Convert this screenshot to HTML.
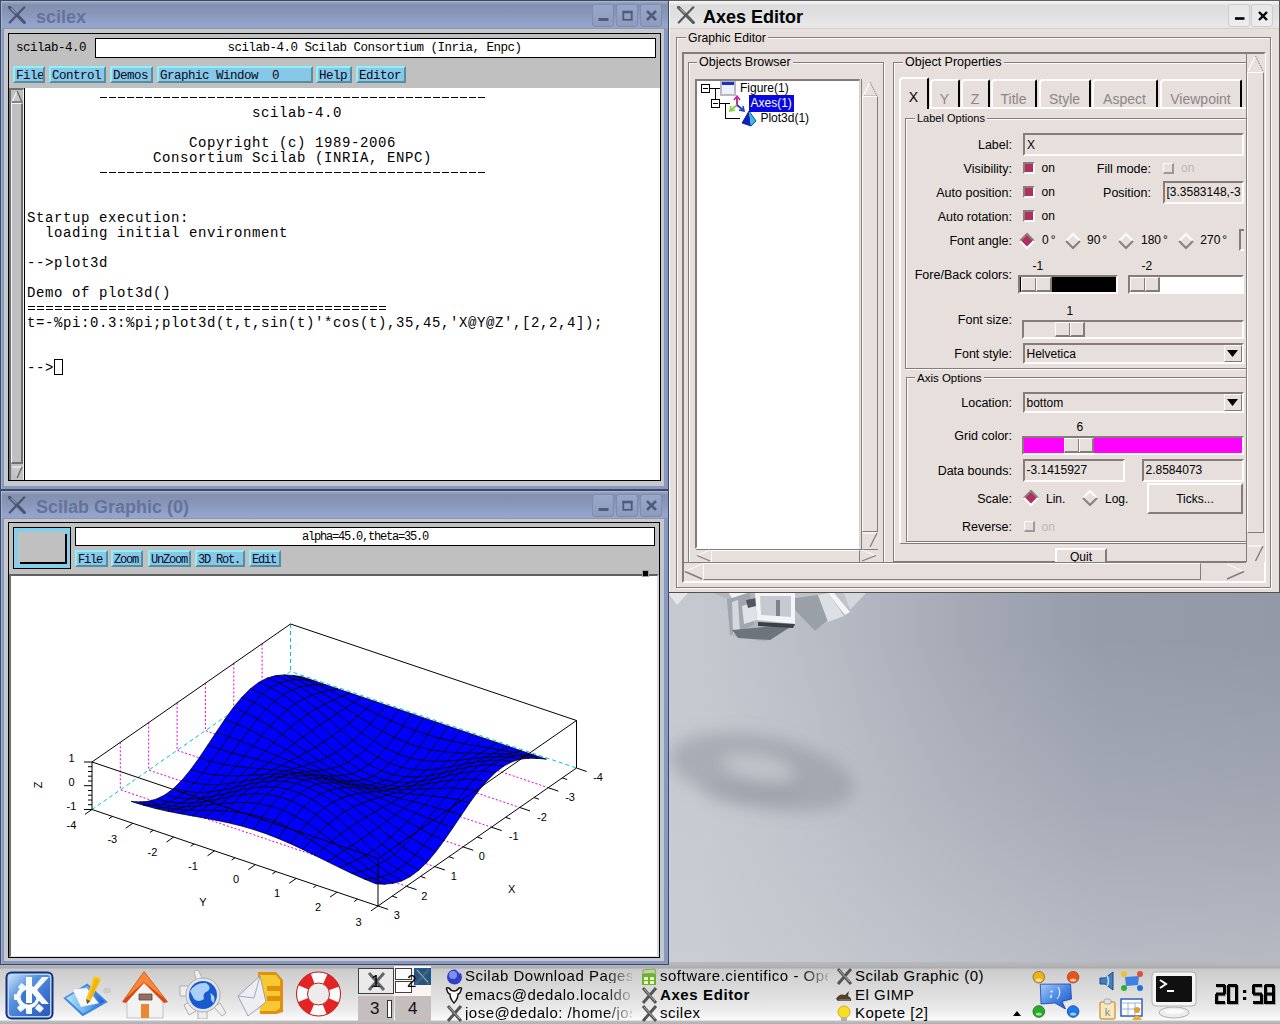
<!DOCTYPE html><html><head><meta charset="utf-8"><style>
*{margin:0;padding:0;box-sizing:border-box}
html,body{width:1280px;height:1024px;overflow:hidden}
body{position:relative;font-family:"Liberation Sans",sans-serif;background:#a9aeb7}
div{position:absolute}
.t{white-space:pre;line-height:1}
.mono{font-family:"Liberation Mono",monospace}
.mb{background:#87c8e8;border-style:solid;border-width:2px;border-color:#90f0f8 #5a8ca0 #5a8ca0 #90f0f8;font-family:"Liberation Mono",monospace;font-size:12.5px;letter-spacing:-0.5px;color:#050a20;line-height:13px;padding-left:1px;white-space:pre;overflow:hidden}
.con{font-family:"Liberation Mono",monospace;font-size:14px;letter-spacing:0.6px;line-height:15px;white-space:pre;color:#000}
.tbtn{border:1px solid #7f8cab;border-radius:3px;background:linear-gradient(#98a6c8,#8d9bbf)}
</style></head><body>
<div style="left:0px;top:0px;width:1280px;height:1024px;background:linear-gradient(180deg,rgba(205,208,214,0) 0px,rgba(205,208,214,0) 640px,rgba(205,208,214,0.25) 800px,rgba(205,208,214,0.6) 965px),linear-gradient(90deg,#c9ccd2 0px,#c5c8cf 700px,#b8bcc5 820px,#a5aab5 960px,#969caa 1100px,#9399a6 1280px)"></div>
<svg width="280" height="180" style="position:absolute;left:640px;top:690px"><defs><filter id="bl" x="-30%" y="-50%" width="160%" height="200%"><feGaussianBlur stdDeviation="8"/></filter></defs><g filter="url(#bl)"><ellipse cx="122" cy="82" rx="94" ry="36" fill="rgba(140,145,156,0.52)" transform="rotate(11 122 82)"/><ellipse cx="112" cy="102" rx="50" ry="14" fill="rgba(140,145,156,0.25)"/><ellipse cx="118" cy="78" rx="36" ry="11" fill="rgba(196,199,205,0.95)" transform="rotate(11 118 78)"/></g></svg>
<svg width="220" height="60" style="position:absolute;left:668px;top:590px">
<path d="M0,3 L20,3 L9,15 Z" fill="#e4e6ea"/>
<path d="M45,3 L59,9 L62,45 L97,52 L127,35 L127,3 Z" fill="#b4b8be"/>
<path d="M59,9 L82,3 L86,35 L62,45 Z" fill="#a0a6ae"/>
<path d="M64,12 L70,10 L72,42 L65,44 Z" fill="#d4d8dc"/>
<path d="M74,16 L87,12 L89,30 L76,34 Z" fill="#dfe2e6"/>
<path d="M78,10 L88,8 L88,16 L80,18 Z" fill="#50565e"/>
<path d="M87,3 L127,3 L127,34 L89,30 Z" fill="#f2f4f6"/>
<path d="M92,6 L123,6 L123,27 L93,25 Z" fill="#c6cad0"/>
<path d="M108,10 L112,10 L112,26 L108,26 Z" fill="#7c828a"/>
<path d="M64,40 L127,34 L102,50 L70,48 Z" fill="#6e747c"/>
<path d="M90,32 L127,34 L125,38 L90,36 Z" fill="#3a4048"/>
<path d="M127,3 L198,3 L147,41 L127,20 Z" fill="#c0c4ca"/>
<path d="M127,8 L150,5 L160,30 L147,41 L127,20 Z" fill="#9aa0a8"/>
<path d="M160,3 L166,3 L182,22 L177,25 Z" fill="#f4f4f6"/>
<path d="M150,5 L160,3 L176,26 L160,32 Z" fill="#dcdfe3"/>
<path d="M176,3 L198,3 L182,20 Z" fill="#d4d7dc"/>
<path d="M60,2 L82,2 L64,8 Z" fill="#f0f2f4"/>
</svg>
<div style="left:0px;top:0px;width:669px;height:490px;background:#8898c0;border:1px solid #3c4a66"></div>
<div style="left:1px;top:1px;width:667px;height:1px;background:#a8b4cc"></div>
<div style="left:1px;top:1px;width:1px;height:488px;background:#a8b4cc"></div>
<div style="left:2px;top:2px;width:666px;height:26px;background:linear-gradient(#9aa5c0 0px,#8390b0 3px,#8794b6 10px,#93a3cc 22px,#96a4c6 26px)"></div>
<div style="left:2px;top:28px;width:666px;height:1px;background:#8c98b0"></div>
<div style="left:8px;top:6px;width:18px;height:18px;"><svg width="18" height="18" viewBox="0 0 18 18" style="position:absolute;left:0;top:0"><path d="M16.3,1.3 L1.8,16.5" stroke="#4a5670" stroke-width="2.2" stroke-linecap="round"/><path d="M1.5,1.3 L16.3,16.5" stroke="#4a5670" stroke-width="3.2" stroke-linecap="round"/><path d="M3,2.3 L8,7.5" stroke="#c8d0e0" stroke-width="1"/></svg></div>
<div class="t" style="left:36px;top:8px;font-size:18px;font-weight:bold;color:#65739a">scilex</div>
<div class="tbtn" style="left:592px;top:4px;width:22px;height:23px;"><svg width="22" height="23" style="position:absolute;left:-1px;top:-1px"><path d="M6.5,15.5 L16.5,15.5" stroke="#505c7c" stroke-width="3"/></svg></div>
<div class="tbtn" style="left:616px;top:4px;width:22px;height:23px;"><svg width="22" height="23" style="position:absolute;left:-1px;top:-1px"><rect x="7.3" y="8" width="8.4" height="7.8" fill="none" stroke="#505c7c" stroke-width="1.8"/><path d="M6.5,8 L16.5,8" stroke="#505c7c" stroke-width="2.6"/></svg></div>
<div class="tbtn" style="left:640px;top:4px;width:22px;height:23px;"><svg width="22" height="23" style="position:absolute;left:-1px;top:-1px"><path d="M7,7 L16,16 M16,7 L7,16" stroke="#505c7c" stroke-width="2.6"/></svg></div>
<div style="left:4px;top:29px;width:660px;height:457px;background:#c5c8cd"></div>
<div style="left:8px;top:33px;width:653px;height:448px;background:#c0c0c0;border:1px solid #000"></div>
<div class="t" style="left:16px;top:42px;font-family:Liberation Mono;font-size:12.5px;letter-spacing:-0.5px;color:#000">scilab-4.0</div>
<div style="left:95px;top:38px;width:561px;height:20px;background:#fff;border:1px solid #000"></div>
<div class="t" style="left:94px;top:42px;font-family:Liberation Mono;font-size:12.5px;letter-spacing:-0.5px;color:#000;width:561px;text-align:center">scilab-4.0 Scilab Consortium (Inria, Enpc)</div>
<div class="mb" style="left:13px;top:66px;width:32px;height:17px;padding-top:2px">File</div>
<div class="mb" style="left:49px;top:66px;width:57px;height:17px;padding-top:2px">Control</div>
<div class="mb" style="left:110px;top:66px;width:43px;height:17px;padding-top:2px">Demos</div>
<div class="mb" style="left:157px;top:66px;width:156px;height:17px;padding-top:2px">Graphic Window  0</div>
<div class="mb" style="left:316px;top:66px;width:36px;height:17px;padding-top:2px">Help</div>
<div class="mb" style="left:356px;top:66px;width:50px;height:17px;padding-top:2px">Editor</div>
<div style="left:9px;top:88px;width:15px;height:392px;background:#c0c0c0;border-style:solid;border-width:2px 1px 0 2px;border-color:#707070 #f0f0f0 #f0f0f0 #707070"></div>
<div style="left:11px;top:90px;width:12px;height:13px;"><svg width="12" height="13" style="position:absolute;left:0;top:0"><path d="M6,1 L11,12 L1,12 Z" fill="#c8c8c8"/><path d="M6,1 L1,12" stroke="#f4f4f4" stroke-width="1.2"/><path d="M6,1 L11,12 L1,12" fill="none" stroke="#6c6c6c" stroke-width="1.4"/></svg></div>
<div style="left:11px;top:103px;width:12px;height:361px;background:#c0c0c0;border-style:solid;border-width:1px 2px 2px 1px;border-color:#f4f4f4 #707070 #707070 #f4f4f4"></div>
<div style="left:11px;top:466px;width:12px;height:13px;"><svg width="12" height="13" style="position:absolute;left:0;top:0"><path d="M1,1 L11,1 L6,12 Z" fill="#c8c8c8"/><path d="M1,1 L11,1" stroke="#f4f4f4" stroke-width="1.2"/><path d="M11,1 L6,12" stroke="#6c6c6c" stroke-width="1.4"/></svg></div>
<div style="left:24px;top:88px;width:1px;height:393px;background:#000"></div>
<div style="left:25px;top:88px;width:635px;height:392px;background:#fff"></div>
<div class="con" style="left:27px;top:91px">
                         scilab-4.0

                  Copyright (c) 1989-2006
              Consortium Scilab (INRIA, ENPC)



Startup execution:
  loading initial environment

-->plot3d

Demo of plot3d()

t=-%pi:0.3:%pi;plot3d(t,t,sin(t)'*cos(t),35,45,'X@Y@Z',[2,2,4]);


--></div>
<div style="left:100px;top:97px;width:385px;height:1px;background:repeating-linear-gradient(90deg,#000 0px,#000 7px,transparent 7px,transparent 9px)"></div>
<div style="left:100px;top:172px;width:385px;height:1px;background:repeating-linear-gradient(90deg,#000 0px,#000 7px,transparent 7px,transparent 9px)"></div>
<div style="left:28px;top:306px;width:358px;height:1px;background:repeating-linear-gradient(90deg,#000 0px,#000 7px,transparent 7px,transparent 9px)"></div>
<div style="left:28px;top:309px;width:358px;height:1px;background:repeating-linear-gradient(90deg,#000 0px,#000 7px,transparent 7px,transparent 9px)"></div>
<div style="left:54px;top:359px;width:9px;height:16px;border:1px solid #000"></div>
<div style="left:0px;top:490px;width:669px;height:475px;background:#8898c0;border:1px solid #3c4a66"></div>
<div style="left:1px;top:491px;width:667px;height:1px;background:#a8b4cc"></div>
<div style="left:1px;top:491px;width:1px;height:473px;background:#a8b4cc"></div>
<div style="left:2px;top:492px;width:666px;height:26px;background:linear-gradient(#9aa5c0 0px,#8390b0 3px,#8794b6 10px,#93a3cc 22px,#96a4c6 26px)"></div>
<div style="left:2px;top:518px;width:666px;height:1px;background:#8c98b0"></div>
<div style="left:8px;top:496px;width:18px;height:18px;"><svg width="18" height="18" viewBox="0 0 18 18" style="position:absolute;left:0;top:0"><path d="M16.3,1.3 L1.8,16.5" stroke="#4a5670" stroke-width="2.2" stroke-linecap="round"/><path d="M1.5,1.3 L16.3,16.5" stroke="#4a5670" stroke-width="3.2" stroke-linecap="round"/><path d="M3,2.3 L8,7.5" stroke="#c8d0e0" stroke-width="1"/></svg></div>
<div class="t" style="left:36px;top:498px;font-size:18px;font-weight:bold;color:#65739a">Scilab Graphic (0)</div>
<div class="tbtn" style="left:592px;top:494px;width:22px;height:23px;"><svg width="22" height="23" style="position:absolute;left:-1px;top:-1px"><path d="M6.5,15.5 L16.5,15.5" stroke="#505c7c" stroke-width="3"/></svg></div>
<div class="tbtn" style="left:616px;top:494px;width:22px;height:23px;"><svg width="22" height="23" style="position:absolute;left:-1px;top:-1px"><rect x="7.3" y="8" width="8.4" height="7.8" fill="none" stroke="#505c7c" stroke-width="1.8"/><path d="M6.5,8 L16.5,8" stroke="#505c7c" stroke-width="2.6"/></svg></div>
<div class="tbtn" style="left:640px;top:494px;width:22px;height:23px;"><svg width="22" height="23" style="position:absolute;left:-1px;top:-1px"><path d="M7,7 L16,16 M16,7 L7,16" stroke="#505c7c" stroke-width="2.6"/></svg></div>
<div style="left:4px;top:519px;width:660px;height:442px;background:#c5c8cd"></div>
<div style="left:8px;top:522px;width:652px;height:436px;background:#c0c0c0;border:1px solid #000"></div>
<div style="left:13px;top:527px;width:58px;height:42px;background:#87ceeb;border:1px solid #000"></div>
<div style="left:18px;top:532px;width:48px;height:32px;background:#c0c0c0"></div>
<div style="left:20px;top:562px;width:47px;height:2px;background:#000"></div>
<div style="left:65px;top:534px;width:2px;height:30px;background:#000"></div>
<div style="left:75px;top:527px;width:580px;height:19px;background:#fff;border:1px solid #000"></div>
<div class="t" style="left:75px;top:531px;font-family:Liberation Mono;font-size:12px;letter-spacing:-1.2px;color:#000;width:580px;text-align:center">alpha=45.0,theta=35.0</div>
<div class="mb" style="left:75px;top:550px;width:33px;height:17px;padding-top:2px;padding-left:1px;font-size:12px;letter-spacing:-1.2px">File</div>
<div class="mb" style="left:111px;top:550px;width:32px;height:17px;padding-top:2px;padding-left:1px;font-size:12px;letter-spacing:-1.2px">Zoom</div>
<div class="mb" style="left:148px;top:550px;width:43px;height:17px;padding-top:2px;padding-left:1px;font-size:12px;letter-spacing:-1.2px">UnZoom</div>
<div class="mb" style="left:195px;top:550px;width:50px;height:17px;padding-top:2px;padding-left:1px;font-size:12px;letter-spacing:-1.2px">3D Rot.</div>
<div class="mb" style="left:249px;top:550px;width:32px;height:17px;padding-top:2px;padding-left:1px;font-size:12px;letter-spacing:-1.2px">Edit</div>
<div style="left:9px;top:574px;width:650px;height:383px;background:#fff;border-top:2px solid #606060;border-left:2px solid #707070;border-right:2px solid #d8d8d8;border-bottom:1px solid #e0e0e0"></div>
<div style="left:642px;top:570px;width:7px;height:7px;background:#000;border:1px solid #a0a0a0"></div>
<svg width="1280" height="1024" style="position:absolute;left:0;top:0" shape-rendering="auto"><g stroke="#00c8d8" stroke-width="1" stroke-dasharray="4,3" fill="none">
<path d="M290.5,624.0 L290.5,671.5 M92.0,809.5 L290.5,671.5 L576.5,768.0"/>
</g>
<g stroke="#e000e0" stroke-width="1" stroke-dasharray="2,2" fill="none">
<path d="M262.1,643.7 L262.1,691.2 L548.2,787.7"/>
<path d="M233.8,663.4 L233.8,710.9 L519.8,807.5"/>
<path d="M205.4,683.1 L205.4,730.6 L491.4,827.2"/>
<path d="M177.1,702.8 L177.1,750.3 L463.1,846.9"/>
<path d="M148.7,722.6 L148.7,770.1 L434.7,866.6"/>
<path d="M120.3,742.3 L120.3,789.8 L406.4,886.3"/>
</g>
<g fill="#0000ff" stroke="#000010" stroke-width="0.75" stroke-linejoin="round">
<path d="M301.2,676.5 L292.7,675.4 L305.0,679.9 L313.5,680.6 Z"/>
<path d="M313.5,680.6 L305.0,679.9 L317.2,684.9 L325.7,684.8 Z"/>
<path d="M292.7,675.4 L284.2,674.9 L296.5,679.7 L305.0,679.9 Z"/>
<path d="M325.7,684.8 L317.2,684.9 L329.5,690.5 L338.0,688.9 Z"/>
<path d="M305.0,679.9 L296.5,679.7 L308.7,685.5 L317.2,684.9 Z"/>
<path d="M284.2,674.9 L275.7,675.6 L288.0,680.6 L296.5,679.7 Z"/>
<path d="M338.0,688.9 L329.5,690.5 L341.8,696.4 L350.3,693.1 Z"/>
<path d="M317.2,684.9 L308.7,685.5 L321.0,692.4 L329.5,690.5 Z"/>
<path d="M296.5,679.7 L288.0,680.6 L300.2,687.2 L308.7,685.5 Z"/>
<path d="M350.3,693.1 L341.8,696.4 L354.0,702.6 L362.5,697.2 Z"/>
<path d="M275.7,675.6 L267.2,678.0 L279.5,683.1 L288.0,680.6 Z"/>
<path d="M329.5,690.5 L321.0,692.4 L333.2,700.0 L341.8,696.4 Z"/>
<path d="M308.7,685.5 L300.2,687.2 L312.5,695.1 L321.0,692.4 Z"/>
<path d="M362.5,697.2 L354.0,702.6 L366.3,708.8 L374.8,701.3 Z"/>
<path d="M288.0,680.6 L279.5,683.1 L291.7,690.2 L300.2,687.2 Z"/>
<path d="M341.8,696.4 L333.2,700.0 L345.5,708.1 L354.0,702.6 Z"/>
<path d="M267.2,678.0 L258.7,682.4 L270.9,687.6 L279.5,683.1 Z"/>
<path d="M321.0,692.4 L312.5,695.1 L324.7,704.1 L333.2,700.0 Z"/>
<path d="M374.8,701.3 L366.3,708.8 L378.5,714.9 L387.0,705.5 Z"/>
<path d="M300.2,687.2 L291.7,690.2 L304.0,698.8 L312.5,695.1 Z"/>
<path d="M354.0,702.6 L345.5,708.1 L357.8,716.2 L366.3,708.8 Z"/>
<path d="M279.5,683.1 L270.9,687.6 L283.2,694.8 L291.7,690.2 Z"/>
<path d="M333.2,700.0 L324.7,704.1 L337.0,713.6 L345.5,708.1 Z"/>
<path d="M387.0,705.5 L378.5,714.9 L390.8,720.7 L399.3,709.6 Z"/>
<path d="M258.7,682.4 L250.2,688.9 L262.4,694.0 L270.9,687.6 Z"/>
<path d="M312.5,695.1 L304.0,698.8 L316.2,708.7 L324.7,704.1 Z"/>
<path d="M366.3,708.8 L357.8,716.2 L370.0,724.1 L378.5,714.9 Z"/>
<path d="M291.7,690.2 L283.2,694.8 L295.5,703.8 L304.0,698.8 Z"/>
<path d="M345.5,708.1 L337.0,713.6 L349.3,723.3 L357.8,716.2 Z"/>
<path d="M399.3,709.6 L390.8,720.7 L403.0,726.0 L411.6,713.7 Z"/>
<path d="M270.9,687.6 L262.4,694.0 L274.7,701.2 L283.2,694.8 Z"/>
<path d="M324.7,704.1 L316.2,708.7 L328.5,719.3 L337.0,713.6 Z"/>
<path d="M378.5,714.9 L370.0,724.1 L382.3,731.3 L390.8,720.7 Z"/>
<path d="M250.2,688.9 L241.7,697.4 L253.9,702.4 L262.4,694.0 Z"/>
<path d="M304.0,698.8 L295.5,703.8 L307.7,714.0 L316.2,708.7 Z"/>
<path d="M357.8,716.2 L349.3,723.3 L361.5,732.6 L370.0,724.1 Z"/>
<path d="M411.6,713.7 L403.0,726.0 L415.3,730.7 L423.8,717.9 Z"/>
<path d="M283.2,694.8 L274.7,701.2 L287.0,710.0 L295.5,703.8 Z"/>
<path d="M337.0,713.6 L328.5,719.3 L340.7,730.0 L349.3,723.3 Z"/>
<path d="M390.8,720.7 L382.3,731.3 L394.5,737.7 L403.0,726.0 Z"/>
<path d="M262.4,694.0 L253.9,702.4 L266.2,709.3 L274.7,701.2 Z"/>
<path d="M316.2,708.7 L307.7,714.0 L320.0,725.1 L328.5,719.3 Z"/>
<path d="M370.0,724.1 L361.5,732.6 L373.8,741.1 L382.3,731.3 Z"/>
<path d="M423.8,717.9 L415.3,730.7 L427.6,734.9 L436.1,722.0 Z"/>
<path d="M241.7,697.4 L233.2,707.8 L245.4,712.6 L253.9,702.4 Z"/>
<path d="M295.5,703.8 L287.0,710.0 L299.2,720.2 L307.7,714.0 Z"/>
<path d="M349.3,723.3 L340.7,730.0 L353.0,740.3 L361.5,732.6 Z"/>
<path d="M403.0,726.0 L394.5,737.7 L406.8,743.0 L415.3,730.7 Z"/>
<path d="M274.7,701.2 L266.2,709.3 L278.4,717.6 L287.0,710.0 Z"/>
<path d="M328.5,719.3 L320.0,725.1 L332.2,736.3 L340.7,730.0 Z"/>
<path d="M382.3,731.3 L373.8,741.1 L386.0,748.3 L394.5,737.7 Z"/>
<path d="M436.1,722.0 L427.6,734.9 L439.8,738.4 L448.3,726.2 Z"/>
<path d="M253.9,702.4 L245.4,712.6 L257.7,718.8 L266.2,709.3 Z"/>
<path d="M307.7,714.0 L299.2,720.2 L311.5,731.0 L320.0,725.1 Z"/>
<path d="M361.5,732.6 L353.0,740.3 L365.3,749.6 L373.8,741.1 Z"/>
<path d="M415.3,730.7 L406.8,743.0 L419.1,747.1 L427.6,734.9 Z"/>
<path d="M233.2,707.8 L224.7,719.6 L236.9,724.2 L245.4,712.6 Z"/>
<path d="M287.0,710.0 L278.4,717.6 L290.7,727.0 L299.2,720.2 Z"/>
<path d="M340.7,730.0 L332.2,736.3 L344.5,747.0 L353.0,740.3 Z"/>
<path d="M394.5,737.7 L386.0,748.3 L398.3,754.0 L406.8,743.0 Z"/>
<path d="M448.3,726.2 L439.8,738.4 L452.1,741.3 L460.6,730.3 Z"/>
<path d="M266.2,709.3 L257.7,718.8 L269.9,726.2 L278.4,717.6 Z"/>
<path d="M320.0,725.1 L311.5,731.0 L323.7,742.1 L332.2,736.3 Z"/>
<path d="M373.8,741.1 L365.3,749.6 L377.5,757.4 L386.0,748.3 Z"/>
<path d="M427.6,734.9 L419.1,747.1 L431.3,750.0 L439.8,738.4 Z"/>
<path d="M245.4,712.6 L236.9,724.2 L249.2,729.6 L257.7,718.8 Z"/>
<path d="M299.2,720.2 L290.7,727.0 L303.0,737.1 L311.5,731.0 Z"/>
<path d="M353.0,740.3 L344.5,747.0 L356.8,756.6 L365.3,749.6 Z"/>
<path d="M406.8,743.0 L398.3,754.0 L410.5,758.1 L419.1,747.1 Z"/>
<path d="M224.7,719.6 L216.2,732.3 L228.4,736.6 L236.9,724.2 Z"/>
<path d="M460.6,730.3 L452.1,741.3 L464.3,743.8 L472.8,734.4 Z"/>
<path d="M278.4,717.6 L269.9,726.2 L282.2,734.5 L290.7,727.0 Z"/>
<path d="M332.2,736.3 L323.7,742.1 L336.0,752.6 L344.5,747.0 Z"/>
<path d="M386.0,748.3 L377.5,757.4 L389.8,763.4 L398.3,754.0 Z"/>
<path d="M439.8,738.4 L431.3,750.0 L443.6,751.8 L452.1,741.3 Z"/>
<path d="M257.7,718.8 L249.2,729.6 L261.4,735.8 L269.9,726.2 Z"/>
<path d="M311.5,731.0 L303.0,737.1 L315.2,747.4 L323.7,742.1 Z"/>
<path d="M365.3,749.6 L356.8,756.6 L369.0,764.7 L377.5,757.4 Z"/>
<path d="M419.1,747.1 L410.5,758.1 L422.8,760.6 L431.3,750.0 Z"/>
<path d="M236.9,724.2 L228.4,736.6 L240.7,741.1 L249.2,729.6 Z"/>
<path d="M472.8,734.4 L464.3,743.8 L476.6,746.0 L485.1,738.6 Z"/>
<path d="M290.7,727.0 L282.2,734.5 L294.5,743.4 L303.0,737.1 Z"/>
<path d="M344.5,747.0 L336.0,752.6 L348.2,762.1 L356.8,756.6 Z"/>
<path d="M398.3,754.0 L389.8,763.4 L402.0,767.5 L410.5,758.1 Z"/>
<path d="M216.2,732.3 L207.6,745.3 L219.9,749.3 L228.4,736.6 Z"/>
<path d="M452.1,741.3 L443.6,751.8 L455.8,752.8 L464.3,743.8 Z"/>
<path d="M269.9,726.2 L261.4,735.8 L273.7,742.6 L282.2,734.5 Z"/>
<path d="M323.7,742.1 L315.2,747.4 L327.5,757.2 L336.0,752.6 Z"/>
<path d="M377.5,757.4 L369.0,764.7 L381.3,770.9 L389.8,763.4 Z"/>
<path d="M431.3,750.0 L422.8,760.6 L435.1,761.5 L443.6,751.8 Z"/>
<path d="M249.2,729.6 L240.7,741.1 L252.9,746.0 L261.4,735.8 Z"/>
<path d="M485.1,738.6 L476.6,746.0 L488.9,748.0 L497.4,742.7 Z"/>
<path d="M303.0,737.1 L294.5,743.4 L306.7,752.3 L315.2,747.4 Z"/>
<path d="M356.8,756.6 L348.2,762.1 L360.5,770.1 L369.0,764.7 Z"/>
<path d="M410.5,758.1 L402.0,767.5 L414.3,769.7 L422.8,760.6 Z"/>
<path d="M228.4,736.6 L219.9,749.3 L232.2,752.9 L240.7,741.1 Z"/>
<path d="M464.3,743.8 L455.8,752.8 L468.1,753.2 L476.6,746.0 Z"/>
<path d="M282.2,734.5 L273.7,742.6 L285.9,749.7 L294.5,743.4 Z"/>
<path d="M336.0,752.6 L327.5,757.2 L339.7,766.1 L348.2,762.1 Z"/>
<path d="M389.8,763.4 L381.3,770.9 L393.5,775.0 L402.0,767.5 Z"/>
<path d="M207.6,745.3 L199.1,758.0 L211.4,761.6 L219.9,749.3 Z"/>
<path d="M443.6,751.8 L435.1,761.5 L447.3,761.3 L455.8,752.8 Z"/>
<path d="M261.4,735.8 L252.9,746.0 L265.2,751.0 L273.7,742.6 Z"/>
<path d="M497.4,742.7 L488.9,748.0 L501.1,750.1 L509.6,746.8 Z"/>
<path d="M315.2,747.4 L306.7,752.3 L319.0,760.9 L327.5,757.2 Z"/>
<path d="M369.0,764.7 L360.5,770.1 L372.8,776.3 L381.3,770.9 Z"/>
<path d="M422.8,760.6 L414.3,769.7 L426.6,770.0 L435.1,761.5 Z"/>
<path d="M240.7,741.1 L232.2,752.9 L244.4,756.3 L252.9,746.0 Z"/>
<path d="M476.6,746.0 L468.1,753.2 L480.3,753.4 L488.9,748.0 Z"/>
<path d="M294.5,743.4 L285.9,749.7 L298.2,756.9 L306.7,752.3 Z"/>
<path d="M348.2,762.1 L339.7,766.1 L352.0,773.7 L360.5,770.1 Z"/>
<path d="M402.0,767.5 L393.5,775.0 L405.8,777.0 L414.3,769.7 Z"/>
<path d="M219.9,749.3 L211.4,761.6 L223.7,764.4 L232.2,752.9 Z"/>
<path d="M455.8,752.8 L447.3,761.3 L459.6,760.2 L468.1,753.2 Z"/>
<path d="M273.7,742.6 L265.2,751.0 L277.4,756.1 L285.9,749.7 Z"/>
<path d="M509.6,746.8 L501.1,750.1 L513.4,752.4 L521.9,751.0 Z"/>
<path d="M327.5,757.2 L319.0,760.9 L331.2,768.7 L339.7,766.1 Z"/>
<path d="M381.3,770.9 L372.8,776.3 L385.0,780.3 L393.5,775.0 Z"/>
<path d="M199.1,758.0 L190.6,769.7 L202.9,773.1 L211.4,761.6 Z"/>
<path d="M435.1,761.5 L426.6,770.0 L438.8,768.9 L447.3,761.3 Z"/>
<path d="M252.9,746.0 L244.4,756.3 L256.7,759.5 L265.2,751.0 Z"/>
<path d="M488.9,748.0 L480.3,753.4 L492.6,753.6 L501.1,750.1 Z"/>
<path d="M306.7,752.3 L298.2,756.9 L310.5,763.8 L319.0,760.9 Z"/>
<path d="M360.5,770.1 L352.0,773.7 L364.3,779.6 L372.8,776.3 Z"/>
<path d="M414.3,769.7 L405.8,777.0 L418.0,777.1 L426.6,770.0 Z"/>
<path d="M232.2,752.9 L223.7,764.4 L235.9,766.4 L244.4,756.3 Z"/>
<path d="M468.1,753.2 L459.6,760.2 L471.8,758.8 L480.3,753.4 Z"/>
<path d="M285.9,749.7 L277.4,756.1 L289.7,761.2 L298.2,756.9 Z"/>
<path d="M521.9,751.0 L513.4,752.4 L525.6,755.2 L534.1,755.1 Z"/>
<path d="M339.7,766.1 L331.2,768.7 L343.5,775.5 L352.0,773.7 Z"/>
<path d="M393.5,775.0 L385.0,780.3 L397.3,782.4 L405.8,777.0 Z"/>
<path d="M211.4,761.6 L202.9,773.1 L215.1,775.1 L223.7,764.4 Z"/>
<path d="M447.3,761.3 L438.8,768.9 L451.1,766.9 L459.6,760.2 Z"/>
<path d="M265.2,751.0 L256.7,759.5 L268.9,762.5 L277.4,756.1 Z"/>
<path d="M501.1,750.1 L492.6,753.6 L504.9,754.3 L513.4,752.4 Z"/>
<path d="M319.0,760.9 L310.5,763.8 L322.7,770.3 L331.2,768.7 Z"/>
<path d="M372.8,776.3 L364.3,779.6 L376.5,783.6 L385.0,780.3 Z"/>
<path d="M190.6,769.7 L182.1,780.0 L194.4,783.2 L202.9,773.1 Z"/>
<path d="M426.6,770.0 L418.0,777.1 L430.3,775.6 L438.8,768.9 Z"/>
<path d="M244.4,756.3 L235.9,766.4 L248.2,767.8 L256.7,759.5 Z"/>
<path d="M480.3,753.4 L471.8,758.8 L484.1,757.5 L492.6,753.6 Z"/>
<path d="M298.2,756.9 L289.7,761.2 L302.0,766.3 L310.5,763.8 Z"/>
<path d="M534.1,755.1 L525.6,755.2 L537.9,758.4 L546.4,759.2 Z"/>
<path d="M352.0,773.7 L343.5,775.5 L355.7,781.1 L364.3,779.6 Z"/>
<path d="M405.8,777.0 L397.3,782.4 L409.5,782.6 L418.0,777.1 Z"/>
<path d="M223.7,764.4 L215.1,775.1 L227.4,775.9 L235.9,766.4 Z"/>
<path d="M459.6,760.2 L451.1,766.9 L463.3,764.4 L471.8,758.8 Z"/>
<path d="M277.4,756.1 L268.9,762.5 L281.2,765.5 L289.7,761.2 Z"/>
<path d="M513.4,752.4 L504.9,754.3 L517.1,755.7 L525.6,755.2 Z"/>
<path d="M331.2,768.7 L322.7,770.3 L335.0,776.1 L343.5,775.5 Z"/>
<path d="M385.0,780.3 L376.5,783.6 L388.8,785.9 L397.3,782.4 Z"/>
<path d="M202.9,773.1 L194.4,783.2 L206.6,784.6 L215.1,775.1 Z"/>
<path d="M438.8,768.9 L430.3,775.6 L442.6,773.1 L451.1,766.9 Z"/>
<path d="M256.7,759.5 L248.2,767.8 L260.4,768.9 L268.9,762.5 Z"/>
<path d="M492.6,753.6 L484.1,757.5 L496.4,756.9 L504.9,754.3 Z"/>
<path d="M310.5,763.8 L302.0,766.3 L314.2,771.2 L322.7,770.3 Z"/>
<path d="M364.3,779.6 L355.7,781.1 L368.0,785.2 L376.5,783.6 Z"/>
<path d="M182.1,780.0 L173.6,788.4 L185.9,791.5 L194.4,783.2 Z"/>
<path d="M418.0,777.1 L409.5,782.6 L421.8,781.2 L430.3,775.6 Z"/>
<path d="M235.9,766.4 L227.4,775.9 L239.7,775.8 L248.2,767.8 Z"/>
<path d="M471.8,758.8 L463.3,764.4 L475.6,762.1 L484.1,757.5 Z"/>
<path d="M289.7,761.2 L281.2,765.5 L293.4,768.6 L302.0,766.3 Z"/>
<path d="M525.6,755.2 L517.1,755.7 L529.4,758.2 L537.9,758.4 Z"/>
<path d="M343.5,775.5 L335.0,776.1 L347.2,781.1 L355.7,781.1 Z"/>
<path d="M397.3,782.4 L388.8,785.9 L401.0,786.6 L409.5,782.6 Z"/>
<path d="M215.1,775.1 L206.6,784.6 L218.9,784.6 L227.4,775.9 Z"/>
<path d="M451.1,766.9 L442.6,773.1 L454.8,770.2 L463.3,764.4 Z"/>
<path d="M268.9,762.5 L260.4,768.9 L272.7,769.9 L281.2,765.5 Z"/>
<path d="M504.9,754.3 L496.4,756.9 L508.6,757.3 L517.1,755.7 Z"/>
<path d="M322.7,770.3 L314.2,771.2 L326.5,775.9 L335.0,776.1 Z"/>
<path d="M376.5,783.6 L368.0,785.2 L380.3,787.8 L388.8,785.9 Z"/>
<path d="M194.4,783.2 L185.9,791.5 L198.1,792.6 L206.6,784.6 Z"/>
<path d="M430.3,775.6 L421.8,781.2 L434.1,778.9 L442.6,773.1 Z"/>
<path d="M248.2,767.8 L239.7,775.8 L251.9,775.2 L260.4,768.9 Z"/>
<path d="M484.1,757.5 L475.6,762.1 L487.8,760.6 L496.4,756.9 Z"/>
<path d="M302.0,766.3 L293.4,768.6 L305.7,771.9 L314.2,771.2 Z"/>
<path d="M355.7,781.1 L347.2,781.1 L359.5,785.3 L368.0,785.2 Z"/>
<path d="M173.6,788.4 L165.1,794.8 L177.4,797.9 L185.9,791.5 Z"/>
<path d="M409.5,782.6 L401.0,786.6 L413.3,785.9 L421.8,781.2 Z"/>
<path d="M227.4,775.9 L218.9,784.6 L231.2,783.3 L239.7,775.8 Z"/>
<path d="M463.3,764.4 L454.8,770.2 L467.1,767.4 L475.6,762.1 Z"/>
<path d="M281.2,765.5 L272.7,769.9 L284.9,771.1 L293.4,768.6 Z"/>
<path d="M517.1,755.7 L508.6,757.3 L520.9,759.1 L529.4,758.2 Z"/>
<path d="M335.0,776.1 L326.5,775.9 L338.7,780.3 L347.2,781.1 Z"/>
<path d="M388.8,785.9 L380.3,787.8 L392.5,789.2 L401.0,786.6 Z"/>
<path d="M206.6,784.6 L198.1,792.6 L210.4,792.0 L218.9,784.6 Z"/>
<path d="M442.6,773.1 L434.1,778.9 L446.3,776.2 L454.8,770.2 Z"/>
<path d="M260.4,768.9 L251.9,775.2 L264.2,774.5 L272.7,769.9 Z"/>
<path d="M496.4,756.9 L487.8,760.6 L500.1,760.3 L508.6,757.3 Z"/>
<path d="M314.2,771.2 L305.7,771.9 L318.0,775.4 L326.5,775.9 Z"/>
<path d="M368.0,785.2 L359.5,785.3 L371.8,788.5 L380.3,787.8 Z"/>
<path d="M185.9,791.5 L177.4,797.9 L189.6,798.9 L198.1,792.6 Z"/>
<path d="M421.8,781.2 L413.3,785.9 L425.5,784.3 L434.1,778.9 Z"/>
<path d="M239.7,775.8 L231.2,783.3 L243.4,781.4 L251.9,775.2 Z"/>
<path d="M475.6,762.1 L467.1,767.4 L479.3,765.5 L487.8,760.6 Z"/>
<path d="M293.4,768.6 L284.9,771.1 L297.2,772.8 L305.7,771.9 Z"/>
<path d="M347.2,781.1 L338.7,780.3 L351.0,784.5 L359.5,785.3 Z"/>
<path d="M165.1,794.8 L156.6,799.0 L168.9,802.2 L177.4,797.9 Z"/>
<path d="M401.0,786.6 L392.5,789.2 L404.8,789.6 L413.3,785.9 Z"/>
<path d="M218.9,784.6 L210.4,792.0 L222.6,790.2 L231.2,783.3 Z"/>
<path d="M454.8,770.2 L446.3,776.2 L458.6,773.6 L467.1,767.4 Z"/>
<path d="M272.7,769.9 L264.2,774.5 L276.4,774.1 L284.9,771.1 Z"/>
<path d="M508.6,757.3 L500.1,760.3 L512.4,761.6 L520.9,759.1 Z"/>
<path d="M326.5,775.9 L318.0,775.4 L330.2,779.2 L338.7,780.3 Z"/>
<path d="M380.3,787.8 L371.8,788.5 L384.0,790.9 L392.5,789.2 Z"/>
<path d="M198.1,792.6 L189.6,798.9 L201.9,798.2 L210.4,792.0 Z"/>
<path d="M434.1,778.9 L425.5,784.3 L437.8,782.3 L446.3,776.2 Z"/>
<path d="M251.9,775.2 L243.4,781.4 L255.7,779.4 L264.2,774.5 Z"/>
<path d="M487.8,760.6 L479.3,765.5 L491.6,764.9 L500.1,760.3 Z"/>
<path d="M305.7,771.9 L297.2,772.8 L309.5,775.2 L318.0,775.4 Z"/>
<path d="M359.5,785.3 L351.0,784.5 L363.2,788.3 L371.8,788.5 Z"/>
<path d="M177.4,797.9 L168.9,802.2 L181.1,803.4 L189.6,798.9 Z"/>
<path d="M413.3,785.9 L404.8,789.6 L417.0,789.2 L425.5,784.3 Z"/>
<path d="M231.2,783.3 L222.6,790.2 L234.9,787.5 L243.4,781.4 Z"/>
<path d="M467.1,767.4 L458.6,773.6 L470.8,771.8 L479.3,765.5 Z"/>
<path d="M284.9,771.1 L276.4,774.1 L288.7,774.4 L297.2,772.8 Z"/>
<path d="M338.7,780.3 L330.2,779.2 L342.5,783.4 L351.0,784.5 Z"/>
<path d="M156.6,799.0 L148.1,801.3 L160.3,804.6 L168.9,802.2 Z"/>
<path d="M392.5,789.2 L384.0,790.9 L396.3,792.6 L404.8,789.6 Z"/>
<path d="M210.4,792.0 L201.9,798.2 L214.1,796.2 L222.6,790.2 Z"/>
<path d="M446.3,776.2 L437.8,782.3 L450.1,780.5 L458.6,773.6 Z"/>
<path d="M264.2,774.5 L255.7,779.4 L267.9,777.8 L276.4,774.1 Z"/>
<path d="M500.1,760.3 L491.6,764.9 L503.9,766.1 L512.4,761.6 Z"/>
<path d="M318.0,775.4 L309.5,775.2 L321.7,778.4 L330.2,779.2 Z"/>
<path d="M371.8,788.5 L363.2,788.3 L375.5,791.9 L384.0,790.9 Z"/>
<path d="M189.6,798.9 L181.1,803.4 L193.4,803.1 L201.9,798.2 Z"/>
<path d="M425.5,784.3 L417.0,789.2 L429.3,788.6 L437.8,782.3 Z"/>
<path d="M243.4,781.4 L234.9,787.5 L247.2,784.7 L255.7,779.4 Z"/>
<path d="M479.3,765.5 L470.8,771.8 L483.1,771.3 L491.6,764.9 Z"/>
<path d="M297.2,772.8 L288.7,774.4 L300.9,775.8 L309.5,775.2 Z"/>
<path d="M351.0,784.5 L342.5,783.4 L354.7,787.8 L363.2,788.3 Z"/>
<path d="M168.9,802.2 L160.3,804.6 L172.6,806.4 L181.1,803.4 Z"/>
<path d="M404.8,789.6 L396.3,792.6 L408.5,793.9 L417.0,789.2 Z"/>
<path d="M222.6,790.2 L214.1,796.2 L226.4,793.5 L234.9,787.5 Z"/>
<path d="M458.6,773.6 L450.1,780.5 L462.3,779.4 L470.8,771.8 Z"/>
<path d="M276.4,774.1 L267.9,777.8 L280.2,777.1 L288.7,774.4 Z"/>
<path d="M330.2,779.2 L321.7,778.4 L334.0,782.6 L342.5,783.4 Z"/>
<path d="M148.1,801.3 L139.6,801.9 L151.8,805.5 L160.3,804.6 Z"/>
<path d="M384.0,790.9 L375.5,791.9 L387.8,795.2 L396.3,792.6 Z"/>
<path d="M201.9,798.2 L193.4,803.1 L205.6,801.5 L214.1,796.2 Z"/>
<path d="M437.8,782.3 L429.3,788.6 L441.6,788.1 L450.1,780.5 Z"/>
<path d="M255.7,779.4 L247.2,784.7 L259.4,782.4 L267.9,777.8 Z"/>
<path d="M491.6,764.9 L483.1,771.3 L495.3,772.5 L503.9,766.1 Z"/>
<path d="M309.5,775.2 L300.9,775.8 L313.2,778.6 L321.7,778.4 Z"/>
<path d="M363.2,788.3 L354.7,787.8 L367.0,792.6 L375.5,791.9 Z"/>
<path d="M181.1,803.4 L172.6,806.4 L184.9,806.8 L193.4,803.1 Z"/>
<path d="M417.0,789.2 L408.5,793.9 L420.8,795.0 L429.3,788.6 Z"/>
<path d="M234.9,787.5 L226.4,793.5 L238.7,790.6 L247.2,784.7 Z"/>
<path d="M470.8,771.8 L462.3,779.4 L474.6,779.4 L483.1,771.3 Z"/>
<path d="M288.7,774.4 L280.2,777.1 L292.4,777.8 L300.9,775.8 Z"/>
<path d="M342.5,783.4 L334.0,782.6 L346.2,787.7 L354.7,787.8 Z"/>
<path d="M160.3,804.6 L151.8,805.5 L164.1,807.9 L172.6,806.4 Z"/>
<path d="M396.3,792.6 L387.8,795.2 L400.0,798.4 L408.5,793.9 Z"/>
<path d="M214.1,796.2 L205.6,801.5 L217.9,799.3 L226.4,793.5 Z"/>
<path d="M450.1,780.5 L441.6,788.1 L453.8,788.1 L462.3,779.4 Z"/>
<path d="M267.9,777.8 L259.4,782.4 L271.7,781.2 L280.2,777.1 Z"/>
<path d="M321.7,778.4 L313.2,778.6 L325.5,782.8 L334.0,782.6 Z"/>
<path d="M139.6,801.9 L131.1,801.4 L143.3,805.2 L151.8,805.5 Z"/>
<path d="M375.5,791.9 L367.0,792.6 L379.3,797.6 L387.8,795.2 Z"/>
<path d="M193.4,803.1 L184.9,806.8 L197.1,806.1 L205.6,801.5 Z"/>
<path d="M429.3,788.6 L420.8,795.0 L433.0,796.2 L441.6,788.1 Z"/>
<path d="M247.2,784.7 L238.7,790.6 L250.9,788.1 L259.4,782.4 Z"/>
<path d="M483.1,771.3 L474.6,779.4 L486.8,781.0 L495.3,772.5 Z"/>
<path d="M300.9,775.8 L292.4,777.8 L304.7,780.2 L313.2,778.6 Z"/>
<path d="M354.7,787.8 L346.2,787.7 L358.5,793.6 L367.0,792.6 Z"/>
<path d="M172.6,806.4 L164.1,807.9 L176.4,809.4 L184.9,806.8 Z"/>
<path d="M408.5,793.9 L400.0,798.4 L412.3,801.5 L420.8,795.0 Z"/>
<path d="M226.4,793.5 L217.9,799.3 L230.1,796.9 L238.7,790.6 Z"/>
<path d="M462.3,779.4 L453.8,788.1 L466.1,789.0 L474.6,779.4 Z"/>
<path d="M280.2,777.1 L271.7,781.2 L283.9,781.4 L292.4,777.8 Z"/>
<path d="M334.0,782.6 L325.5,782.8 L337.7,788.4 L346.2,787.7 Z"/>
<path d="M151.8,805.5 L143.3,805.2 L155.6,808.5 L164.1,807.9 Z"/>
<path d="M387.8,795.2 L379.3,797.6 L391.5,802.8 L400.0,798.4 Z"/>
<path d="M205.6,801.5 L197.1,806.1 L209.4,804.9 L217.9,799.3 Z"/>
<path d="M441.6,788.1 L433.0,796.2 L445.3,797.7 L453.8,788.1 Z"/>
<path d="M259.4,782.4 L250.9,788.1 L263.2,786.8 L271.7,781.2 Z"/>
<path d="M313.2,778.6 L304.7,780.2 L317.0,784.4 L325.5,782.8 Z"/>
<path d="M367.0,792.6 L358.5,793.6 L370.7,800.2 L379.3,797.6 Z"/>
<path d="M184.9,806.8 L176.4,809.4 L188.6,810.1 L197.1,806.1 Z"/>
<path d="M420.8,795.0 L412.3,801.5 L424.5,804.7 L433.0,796.2 Z"/>
<path d="M238.7,790.6 L230.1,796.9 L242.4,794.9 L250.9,788.1 Z"/>
<path d="M474.6,779.4 L466.1,789.0 L478.3,791.1 L486.8,781.0 Z"/>
<path d="M292.4,777.8 L283.9,781.4 L296.2,783.6 L304.7,780.2 Z"/>
<path d="M346.2,787.7 L337.7,788.4 L350.0,795.3 L358.5,793.6 Z"/>
<path d="M164.1,807.9 L155.6,808.5 L167.8,811.3 L176.4,809.4 Z"/>
<path d="M400.0,798.4 L391.5,802.8 L403.8,808.1 L412.3,801.5 Z"/>
<path d="M217.9,799.3 L209.4,804.9 L221.6,803.6 L230.1,796.9 Z"/>
<path d="M453.8,788.1 L445.3,797.7 L457.6,799.9 L466.1,789.0 Z"/>
<path d="M271.7,781.2 L263.2,786.8 L275.4,787.0 L283.9,781.4 Z"/>
<path d="M325.5,782.8 L317.0,784.4 L329.2,790.4 L337.7,788.4 Z"/>
<path d="M379.3,797.6 L370.7,800.2 L383.0,807.3 L391.5,802.8 Z"/>
<path d="M197.1,806.1 L188.6,810.1 L200.9,810.5 L209.4,804.9 Z"/>
<path d="M433.0,796.2 L424.5,804.7 L436.8,808.0 L445.3,797.7 Z"/>
<path d="M250.9,788.1 L242.4,794.9 L254.7,793.9 L263.2,786.8 Z"/>
<path d="M304.7,780.2 L296.2,783.6 L308.4,787.8 L317.0,784.4 Z"/>
<path d="M358.5,793.6 L350.0,795.3 L362.2,803.3 L370.7,800.2 Z"/>
<path d="M176.4,809.4 L167.8,811.3 L180.1,813.7 L188.6,810.1 Z"/>
<path d="M412.3,801.5 L403.8,808.1 L416.0,813.3 L424.5,804.7 Z"/>
<path d="M230.1,796.9 L221.6,803.6 L233.9,802.6 L242.4,794.9 Z"/>
<path d="M466.1,789.0 L457.6,799.9 L469.8,802.7 L478.3,791.1 Z"/>
<path d="M283.9,781.4 L275.4,787.0 L287.7,789.1 L296.2,783.6 Z"/>
<path d="M337.7,788.4 L329.2,790.4 L341.5,798.0 L350.0,795.3 Z"/>
<path d="M391.5,802.8 L383.0,807.3 L395.3,814.6 L403.8,808.1 Z"/>
<path d="M209.4,804.9 L200.9,810.5 L213.1,810.7 L221.6,803.6 Z"/>
<path d="M445.3,797.7 L436.8,808.0 L449.1,811.4 L457.6,799.9 Z"/>
<path d="M263.2,786.8 L254.7,793.9 L266.9,794.4 L275.4,787.0 Z"/>
<path d="M317.0,784.4 L308.4,787.8 L320.7,794.0 L329.2,790.4 Z"/>
<path d="M370.7,800.2 L362.2,803.3 L374.5,812.0 L383.0,807.3 Z"/>
<path d="M188.6,810.1 L180.1,813.7 L192.4,815.9 L200.9,810.5 Z"/>
<path d="M424.5,804.7 L416.0,813.3 L428.3,818.4 L436.8,808.0 Z"/>
<path d="M242.4,794.9 L233.9,802.6 L246.2,802.5 L254.7,793.9 Z"/>
<path d="M296.2,783.6 L287.7,789.1 L299.9,793.3 L308.4,787.8 Z"/>
<path d="M350.0,795.3 L341.5,798.0 L353.7,807.1 L362.2,803.3 Z"/>
<path d="M403.8,808.1 L395.3,814.6 L407.5,821.8 L416.0,813.3 Z"/>
<path d="M221.6,803.6 L213.1,810.7 L225.4,811.2 L233.9,802.6 Z"/>
<path d="M457.6,799.9 L449.1,811.4 L461.3,815.2 L469.8,802.7 Z"/>
<path d="M275.4,787.0 L266.9,794.4 L279.2,796.6 L287.7,789.1 Z"/>
<path d="M329.2,790.4 L320.7,794.0 L333.0,802.1 L341.5,798.0 Z"/>
<path d="M383.0,807.3 L374.5,812.0 L386.8,821.0 L395.3,814.6 Z"/>
<path d="M200.9,810.5 L192.4,815.9 L204.6,818.1 L213.1,810.7 Z"/>
<path d="M436.8,808.0 L428.3,818.4 L440.5,823.3 L449.1,811.4 Z"/>
<path d="M254.7,793.9 L246.2,802.5 L258.4,803.6 L266.9,794.4 Z"/>
<path d="M308.4,787.8 L299.9,793.3 L312.2,799.5 L320.7,794.0 Z"/>
<path d="M362.2,803.3 L353.7,807.1 L366.0,817.0 L374.5,812.0 Z"/>
<path d="M416.0,813.3 L407.5,821.8 L419.8,828.6 L428.3,818.4 Z"/>
<path d="M233.9,802.6 L225.4,811.2 L237.6,812.3 L246.2,802.5 Z"/>
<path d="M287.7,789.1 L279.2,796.6 L291.4,800.8 L299.9,793.3 Z"/>
<path d="M341.5,798.0 L333.0,802.1 L345.2,811.7 L353.7,807.1 Z"/>
<path d="M395.3,814.6 L386.8,821.0 L399.0,829.9 L407.5,821.8 Z"/>
<path d="M213.1,810.7 L204.6,818.1 L216.9,820.4 L225.4,811.2 Z"/>
<path d="M449.1,811.4 L440.5,823.3 L452.8,827.9 L461.3,815.2 Z"/>
<path d="M266.9,794.4 L258.4,803.6 L270.7,806.1 L279.2,796.6 Z"/>
<path d="M320.7,794.0 L312.2,799.5 L324.5,807.7 L333.0,802.1 Z"/>
<path d="M374.5,812.0 L366.0,817.0 L378.2,827.3 L386.8,821.0 Z"/>
<path d="M428.3,818.4 L419.8,828.6 L432.0,834.8 L440.5,823.3 Z"/>
<path d="M246.2,802.5 L237.6,812.3 L249.9,814.3 L258.4,803.6 Z"/>
<path d="M299.9,793.3 L291.4,800.8 L303.7,807.0 L312.2,799.5 Z"/>
<path d="M353.7,807.1 L345.2,811.7 L357.5,822.4 L366.0,817.0 Z"/>
<path d="M407.5,821.8 L399.0,829.9 L411.3,838.2 L419.8,828.6 Z"/>
<path d="M225.4,811.2 L216.9,820.4 L229.1,823.0 L237.6,812.3 Z"/>
<path d="M279.2,796.6 L270.7,806.1 L282.9,810.3 L291.4,800.8 Z"/>
<path d="M333.0,802.1 L324.5,807.7 L336.7,817.4 L345.2,811.7 Z"/>
<path d="M386.8,821.0 L378.2,827.3 L390.5,837.4 L399.0,829.9 Z"/>
<path d="M440.5,823.3 L432.0,834.8 L444.3,840.3 L452.8,827.9 Z"/>
<path d="M258.4,803.6 L249.9,814.3 L262.2,817.3 L270.7,806.1 Z"/>
<path d="M312.2,799.5 L303.7,807.0 L315.9,814.8 L324.5,807.7 Z"/>
<path d="M366.0,817.0 L357.5,822.4 L369.7,833.4 L378.2,827.3 Z"/>
<path d="M419.8,828.6 L411.3,838.2 L423.5,845.6 L432.0,834.8 Z"/>
<path d="M237.6,812.3 L229.1,823.0 L241.4,826.0 L249.9,814.3 Z"/>
<path d="M291.4,800.8 L282.9,810.3 L295.2,816.1 L303.7,807.0 Z"/>
<path d="M345.2,811.7 L336.7,817.4 L349.0,828.2 L357.5,822.4 Z"/>
<path d="M399.0,829.9 L390.5,837.4 L402.8,846.9 L411.3,838.2 Z"/>
<path d="M270.7,806.1 L262.2,817.3 L274.4,821.4 L282.9,810.3 Z"/>
<path d="M324.5,807.7 L315.9,814.8 L328.2,824.2 L336.7,817.4 Z"/>
<path d="M378.2,827.3 L369.7,833.4 L382.0,844.3 L390.5,837.4 Z"/>
<path d="M432.0,834.8 L423.5,845.6 L435.8,851.8 L444.3,840.3 Z"/>
<path d="M249.9,814.3 L241.4,826.0 L253.7,829.6 L262.2,817.3 Z"/>
<path d="M303.7,807.0 L295.2,816.1 L307.4,823.4 L315.9,814.8 Z"/>
<path d="M357.5,822.4 L349.0,828.2 L361.2,839.4 L369.7,833.4 Z"/>
<path d="M411.3,838.2 L402.8,846.9 L415.0,855.2 L423.5,845.6 Z"/>
<path d="M282.9,810.3 L274.4,821.4 L286.7,826.8 L295.2,816.1 Z"/>
<path d="M336.7,817.4 L328.2,824.2 L340.5,834.4 L349.0,828.2 Z"/>
<path d="M390.5,837.4 L382.0,844.3 L394.3,854.4 L402.8,846.9 Z"/>
<path d="M262.2,817.3 L253.7,829.6 L265.9,833.7 L274.4,821.4 Z"/>
<path d="M315.9,814.8 L307.4,823.4 L319.7,831.9 L328.2,824.2 Z"/>
<path d="M369.7,833.4 L361.2,839.4 L373.5,850.4 L382.0,844.3 Z"/>
<path d="M423.5,845.6 L415.0,855.2 L427.3,861.9 L435.8,851.8 Z"/>
<path d="M295.2,816.1 L286.7,826.8 L298.9,833.1 L307.4,823.4 Z"/>
<path d="M349.0,828.2 L340.5,834.4 L352.7,845.1 L361.2,839.4 Z"/>
<path d="M402.8,846.9 L394.3,854.4 L406.5,863.2 L415.0,855.2 Z"/>
<path d="M274.4,821.4 L265.9,833.7 L278.2,838.5 L286.7,826.8 Z"/>
<path d="M328.2,824.2 L319.7,831.9 L332.0,841.1 L340.5,834.4 Z"/>
<path d="M382.0,844.3 L373.5,850.4 L385.7,860.6 L394.3,854.4 Z"/>
<path d="M307.4,823.4 L298.9,833.1 L311.2,840.4 L319.7,831.9 Z"/>
<path d="M361.2,839.4 L352.7,845.1 L365.0,855.7 L373.5,850.4 Z"/>
<path d="M415.0,855.2 L406.5,863.2 L418.8,870.2 L427.3,861.9 Z"/>
<path d="M286.7,826.8 L278.2,838.5 L290.4,843.7 L298.9,833.1 Z"/>
<path d="M340.5,834.4 L332.0,841.1 L344.2,850.7 L352.7,845.1 Z"/>
<path d="M394.3,854.4 L385.7,860.6 L398.0,869.5 L406.5,863.2 Z"/>
<path d="M319.7,831.9 L311.2,840.4 L323.4,848.2 L332.0,841.1 Z"/>
<path d="M373.5,850.4 L365.0,855.7 L377.2,865.4 L385.7,860.6 Z"/>
<path d="M298.9,833.1 L290.4,843.7 L302.7,849.4 L311.2,840.4 Z"/>
<path d="M352.7,845.1 L344.2,850.7 L356.5,860.2 L365.0,855.7 Z"/>
<path d="M406.5,863.2 L398.0,869.5 L410.3,876.6 L418.8,870.2 Z"/>
<path d="M332.0,841.1 L323.4,848.2 L335.7,856.2 L344.2,850.7 Z"/>
<path d="M385.7,860.6 L377.2,865.4 L389.5,874.0 L398.0,869.5 Z"/>
<path d="M311.2,840.4 L302.7,849.4 L314.9,855.4 L323.4,848.2 Z"/>
<path d="M365.0,855.7 L356.5,860.2 L368.7,869.1 L377.2,865.4 Z"/>
<path d="M344.2,850.7 L335.7,856.2 L348.0,864.1 L356.5,860.2 Z"/>
<path d="M398.0,869.5 L389.5,874.0 L401.8,880.9 L410.3,876.6 Z"/>
<path d="M323.4,848.2 L314.9,855.4 L327.2,861.5 L335.7,856.2 Z"/>
<path d="M377.2,865.4 L368.7,869.1 L381.0,876.9 L389.5,874.0 Z"/>
<path d="M356.5,860.2 L348.0,864.1 L360.2,871.6 L368.7,869.1 Z"/>
<path d="M335.7,856.2 L327.2,861.5 L339.5,867.6 L348.0,864.1 Z"/>
<path d="M389.5,874.0 L381.0,876.9 L393.2,883.3 L401.8,880.9 Z"/>
<path d="M368.7,869.1 L360.2,871.6 L372.5,878.4 L381.0,876.9 Z"/>
<path d="M348.0,864.1 L339.5,867.6 L351.7,873.4 L360.2,871.6 Z"/>
<path d="M381.0,876.9 L372.5,878.4 L384.7,884.2 L393.2,883.3 Z"/>
<path d="M360.2,871.6 L351.7,873.4 L364.0,878.9 L372.5,878.4 Z"/>
<path d="M372.5,878.4 L364.0,878.9 L376.2,883.9 L384.7,884.2 Z"/>
</g>
<g stroke="#000" stroke-width="1" fill="none">
<path d="M290.5,624.0 L92.0,762.0 L378.0,858.5 L576.5,720.5 Z"/>
<path d="M92.0,762.0 L92.0,809.5 M576.5,720.5 L576.5,768.0 M92.0,809.5 L378.0,906.0 L576.5,768.0 M378.0,858.5 L378.0,906.0"/>
</g>
<path d="M92.0,809.5 L84.9,814.4 M112.4,816.4 L109.0,818.7 M132.8,823.3 L125.7,828.2 M153.3,830.2 L149.9,832.5 M173.7,837.0 L166.6,842.0 M194.1,843.9 L190.7,846.3 M214.6,850.8 L207.5,855.8 M235.0,857.7 L231.6,860.1 M255.4,864.6 L248.3,869.6 M275.9,871.5 L272.4,873.9 M296.3,878.4 L289.2,883.3 M316.7,885.3 L313.3,887.7 M337.1,892.2 L330.0,897.1 M357.6,899.1 L354.2,901.5 M378.0,906.0 L370.9,910.9 M576.5,768.0 L586.7,771.5 M562.3,777.9 L567.2,779.5 M548.2,787.7 L558.4,791.2 M534.0,797.6 L538.9,799.2 M519.8,807.5 L530.0,810.9 M505.6,817.3 L510.5,819.0 M491.4,827.2 L501.7,830.6 M477.3,837.0 L482.2,838.7 M463.1,846.9 L473.3,850.3 M448.9,856.7 L453.8,858.4 M434.7,866.6 L444.9,870.0 M420.5,876.4 L425.4,878.1 M406.4,886.3 L416.6,889.7 M392.2,896.1 L397.1,897.8 M378.0,906.0 L388.2,909.4 M92.0,809.5 L84.0,809.5 M92.0,804.7 L88.0,804.7 M92.0,800.0 L88.0,800.0 M92.0,795.2 L88.0,795.2 M92.0,790.5 L88.0,790.5 M92.0,785.7 L84.0,785.7 M92.0,781.0 L88.0,781.0 M92.0,776.2 L88.0,776.2 M92.0,771.5 L88.0,771.5 M92.0,766.7 L88.0,766.7 M92.0,762.0 L84.0,762.0" stroke="#000" stroke-width="1" fill="none"/>
<g font-family="Liberation Sans" font-size="11" text-anchor="middle" fill="#000"><text x="71.5" y="829.0">-4</text><text x="112.3" y="842.5">-3</text><text x="152.5" y="856.0">-2</text><text x="193.0" y="870.0">-1</text><text x="236.0" y="883.0">0</text><text x="277.0" y="897.0">1</text><text x="318.0" y="911.0">2</text><text x="358.6" y="925.6">3</text><text x="598.1" y="781.2">-4</text><text x="570.1" y="800.9">-3</text><text x="542.0" y="820.6">-2</text><text x="513.7" y="840.0">-1</text><text x="481.8" y="859.9">0</text><text x="453.8" y="880.0">1</text><text x="424.2" y="899.5">2</text><text x="396.9" y="919.0">3</text><text x="71.5" y="762.0">1</text><text x="71.5" y="786.0">0</text><text x="71.5" y="810.0">-1</text><text x="511.7" y="893">X</text><text x="203" y="906">Y</text><text transform="translate(42,785) rotate(-90)" x="0" y="0">Z</text></g></svg>
<div style="left:669px;top:0px;width:611px;height:593px;background:#e6dfdc;border-top:1px solid #606060;border-right:1px solid #585858;border-bottom:1px solid #505050"></div>
<div style="left:669px;top:1px;width:1px;height:591px;background:#f8f8f8"></div>
<div style="left:670px;top:1px;width:609px;height:27px;background:linear-gradient(#f2f2f2 0px,#f0f0f0 2px,#dcdcdc 4px,#e0e0e0 14px,#e8e8e8 24px,#e6e4e2 27px)"></div>
<div style="left:670px;top:28px;width:609px;height:1px;background:#d6d0ce"></div>
<div style="left:677px;top:6px;width:18px;height:18px;"><svg width="18" height="18" viewBox="0 0 18 18" style="position:absolute;left:0;top:0"><path d="M16.3,1.3 L1.8,16.5" stroke="#5a5a5a" stroke-width="2.2" stroke-linecap="round"/><path d="M1.5,1.3 L16.3,16.5" stroke="#5a5a5a" stroke-width="3.2" stroke-linecap="round"/><path d="M3,2.3 L8,7.5" stroke="#d8d8d8" stroke-width="1"/></svg></div>
<div class="t" style="left:703px;top:8.2px;font-size:18px;font-weight:bold;color:#000">Axes Editor</div>
<div style="left:1228px;top:4px;width:22px;height:23px;border:1px solid #cdcdcd;border-radius:3px;background:linear-gradient(#e6e6e6,#ededed)"><svg width="22" height="23" style="position:absolute;left:0;top:0"><path d="M6,13.5 L15.5,13.5" stroke="#000" stroke-width="2.6"/></svg></div>
<div style="left:1251px;top:4px;width:22px;height:23px;border:1px solid #cdcdcd;border-radius:3px;background:linear-gradient(#e6e6e6,#ededed)"><svg width="22" height="23" style="position:absolute;left:0;top:0"><path d="M7,7 L15,15 M15,7 L7,15" stroke="#000" stroke-width="2.4"/></svg></div>
<div style="left:676px;top:37px;width:595px;height:551px;border:1px solid #857b7b;box-shadow:inset 1px 1px 0 #fffdfb,1px 1px 0 #fffdfb"></div><div class="t" style="left:686px;top:31.7px;font-size:12.2px;background:#e6dfdc;padding:0 2px;color:#000">Graphic Editor</div>
<div style="left:682px;top:52px;width:584px;height:531px;background:#e6dfdc;border-style:solid;border-width:2px;border-color:#857b7b #fffdfb #fffdfb #857b7b;"></div>
<div style="left:684px;top:54px;width:562px;height:509px;overflow:hidden"><div style="left:-684px;top:-54px;width:1280px;height:1024px"><div style="left:688px;top:62px;width:196px;height:520px;border:1px solid #857b7b;box-shadow:inset 1px 1px 0 #fffdfb,1px 1px 0 #fffdfb"></div><div class="t" style="left:697px;top:56.4px;font-size:12.5px;background:#e6dfdc;padding:0 2px;color:#000">Objects Browser</div><div style="left:695px;top:79px;width:165px;height:470px;background:#fff;border-style:solid;border-width:2px 1px 2px 2px;border-color:#857b7b #d8d0d0 #fffdfb #857b7b"></div><svg width="120" height="50" style="position:absolute;left:698px;top:79px" shape-rendering="crispEdges" fill="none">
<rect x="3.5" y="5.5" width="8" height="8" fill="#fff" stroke="#000"/><path d="M5,9.5 H10" stroke="#000"/>
<path d="M11.5,9.5 H22 M17.5,9.5 V20.5" stroke="#000"/>
<rect x="13.5" y="20.5" width="8" height="8" fill="#fff" stroke="#000"/><path d="M15,24.5 H20" stroke="#000"/>
<path d="M21.5,24.5 H32 M27.5,24.5 V39.5 H42" stroke="#000"/>
<rect x="23" y="3" width="14" height="13" fill="#eef2f8" stroke="#b8b8c0" stroke-width="2"/><rect x="24" y="3" width="12" height="3" fill="#1830d0"/>
</svg><svg width="20" height="20" style="position:absolute;left:728px;top:94px"><path d="M9,11 V3" stroke="#c03090" stroke-width="2"/><path d="M6,6 L9,2 L12,6" fill="none" stroke="#c03090" stroke-width="1.6"/><path d="M9,11 L3,16" stroke="#80d040" stroke-width="2"/><path d="M3,12 L2,17 L7,16" fill="none" stroke="#80d040" stroke-width="1.6"/><path d="M9,11 L15,16" stroke="#2040c0" stroke-width="2"/><path d="M11,16 L16,17 L15,12" fill="none" stroke="#2040c0" stroke-width="1.6"/></svg><svg width="18" height="18" style="position:absolute;left:741px;top:110px"><path d="M8,1 L1,13 L10,16 Z" fill="#1020c0"/><path d="M8,1 L10,16 L15,11 Z" fill="#30c0d8"/><path d="M8,1 L1,13 L10,16 L15,11 Z" fill="none" stroke="#0a1a80" stroke-width="0.8"/></svg><div class="t" style="left:740px;top:81.9px;font-size:12px;color:#000;">Figure(1)</div><div style="left:749px;top:95px;width:45px;height:17px;background:#0808e0"></div><div class="t" style="left:750.5px;top:96.8px;font-size:12px;color:#fff;">Axes(1)</div><div class="t" style="left:760.4px;top:112.0px;font-size:12px;color:#000;">Plot3d(1)</div><div style="left:861px;top:79px;width:17px;height:470px;background:#e6dfdc;border-left:1px solid #857b7b"></div><svg width="16" height="17" style="position:absolute;left:862px;top:80px"><path d="M8,2 L15,16 L1,16 Z" fill="#e6dfdc"/><path d="M1,16 L8,2" stroke="#fffdfb" stroke-width="1.2"/><path d="M8,2 L15,16 L1,16" fill="none" stroke="#857b7b" stroke-width="1" stroke-dasharray="1.5,1"/></svg><div style="left:862px;top:96px;width:16px;height:436px;background:#e6dfdc;border-style:solid;border-width:1px;border-color:#fffdfb #857b7b #857b7b #fffdfb;"></div><svg width="16" height="17" style="position:absolute;left:862px;top:532px"><path d="M1,1 L15,1 L8,15 Z" fill="#e6dfdc"/><path d="M1,1 L15,1" stroke="#fffdfb" stroke-width="1.2"/><path d="M15,1 L8,15" stroke="#857b7b" stroke-width="1.3"/></svg><div style="left:696px;top:549px;width:182px;height:13px;background:#e6dfdc;border-top:1px solid #857b7b"></div><svg width="15" height="13" style="position:absolute;left:696px;top:549px"><path d="M1,6.5 L14,1 L14,12 Z" fill="#e6dfdc"/><path d="M1,6.5 L14,1" stroke="#fffdfb" stroke-width="1"/><path d="M1,6.5 L14,12" stroke="#857b7b" stroke-width="1.2"/></svg><div style="left:711px;top:550px;width:149px;height:13px;background:#e6dfdc;border-style:solid;border-width:1px;border-color:#fffdfb #857b7b #857b7b #fffdfb;"></div><svg width="17" height="13" style="position:absolute;left:860px;top:549px"><path d="M16,6.5 L2,1 L2,12 Z" fill="#e6dfdc"/><path d="M2,1 L16,6.5" stroke="#fffdfb" stroke-width="1"/><path d="M16,6.5 L2,12" stroke="#857b7b" stroke-width="1.2"/></svg><div style="left:893px;top:62px;width:400px;height:500px;border:1px solid #857b7b;box-shadow:inset 1px 1px 0 #fffdfb,1px 1px 0 #fffdfb"></div><div class="t" style="left:903px;top:56.4px;font-size:12.5px;background:#e6dfdc;padding:0 2px;color:#000">Object Properties</div><div style="left:899px;top:107px;width:400px;height:437px;border-top:2px solid #fffdfb;border-left:2px solid #fffdfb;border-bottom:1px solid #857b7b"></div><div style="left:899px;top:77px;width:30px;height:32px;background:#e6dfdc;border-left:2px solid #fffdfb;border-top:2px solid #fffdfb;border-right:2px solid #000;border-top-left-radius:4px;border-top-right-radius:2px"></div><div class="t" style="left:900px;top:90.1px;width:27px;text-align:center;font-size:14px;color:#000">X</div><div style="left:930px;top:79px;width:30px;height:28px;background:#e6dfdc;border-left:2px solid #fffdfb;border-top:2px solid #fffdfb;border-right:2px solid #000;border-top-left-radius:4px;border-top-right-radius:2px"></div><div class="t" style="left:931px;top:92.1px;width:27px;text-align:center;font-size:14px;color:#8c8686">Y</div><div style="left:961px;top:79px;width:29px;height:28px;background:#e6dfdc;border-left:2px solid #fffdfb;border-top:2px solid #fffdfb;border-right:2px solid #000;border-top-left-radius:4px;border-top-right-radius:2px"></div><div class="t" style="left:962px;top:92.1px;width:26px;text-align:center;font-size:14px;color:#8c8686">Z</div><div style="left:991px;top:79px;width:46px;height:28px;background:#e6dfdc;border-left:2px solid #fffdfb;border-top:2px solid #fffdfb;border-right:2px solid #000;border-top-left-radius:4px;border-top-right-radius:2px"></div><div class="t" style="left:992px;top:92.1px;width:43px;text-align:center;font-size:14px;color:#8c8686">Title</div><div style="left:1039px;top:79px;width:52px;height:28px;background:#e6dfdc;border-left:2px solid #fffdfb;border-top:2px solid #fffdfb;border-right:2px solid #000;border-top-left-radius:4px;border-top-right-radius:2px"></div><div class="t" style="left:1040px;top:92.1px;width:49px;text-align:center;font-size:14px;color:#8c8686">Style</div><div style="left:1092px;top:79px;width:66px;height:28px;background:#e6dfdc;border-left:2px solid #fffdfb;border-top:2px solid #fffdfb;border-right:2px solid #000;border-top-left-radius:4px;border-top-right-radius:2px"></div><div class="t" style="left:1093px;top:92.1px;width:63px;text-align:center;font-size:14px;color:#8c8686">Aspect</div><div style="left:1160px;top:79px;width:82px;height:28px;background:#e6dfdc;border-left:2px solid #fffdfb;border-top:2px solid #fffdfb;border-right:2px solid #000;border-top-left-radius:4px;border-top-right-radius:2px"></div><div class="t" style="left:1161px;top:92.1px;width:79px;text-align:center;font-size:14px;color:#8c8686">Viewpoint</div><div style="left:905px;top:118px;width:400px;height:251px;border:1px solid #857b7b;box-shadow:inset 1px 1px 0 #fffdfb,1px 1px 0 #fffdfb"></div><div class="t" style="left:915px;top:112.7px;font-size:11px;background:#e6dfdc;padding:0 2px;color:#000">Label Options</div><div style="left:906px;top:377px;width:400px;height:165px;border:1px solid #857b7b;box-shadow:inset 1px 1px 0 #fffdfb,1px 1px 0 #fffdfb"></div><div class="t" style="left:915px;top:373.3px;font-size:11.5px;background:#e6dfdc;padding:0 2px;color:#000">Axis Options</div><div class="t" style="right:268px;top:139.2px;font-size:12.5px;color:#000;">Label:</div><div class="t" style="right:268px;top:162.7px;font-size:12.5px;color:#000;">Visibility:</div><div class="t" style="right:268px;top:186.7px;font-size:12.5px;color:#000;">Auto position:</div><div class="t" style="right:268px;top:210.7px;font-size:12.5px;color:#000;">Auto rotation:</div><div class="t" style="right:268px;top:234.9px;font-size:12.5px;color:#000;">Font angle:</div><div class="t" style="right:268px;top:269.4px;font-size:12.5px;color:#000;">Fore/Back colors:</div><div class="t" style="right:268px;top:313.8px;font-size:12.5px;color:#000;">Font size:</div><div class="t" style="right:268px;top:348.2px;font-size:12.5px;color:#000;">Font style:</div><div class="t" style="right:268px;top:397.1px;font-size:12.5px;color:#000;">Location:</div><div class="t" style="right:268px;top:429.7px;font-size:12.5px;color:#000;">Grid color:</div><div class="t" style="right:268px;top:464.8px;font-size:12.5px;color:#000;">Data bounds:</div><div class="t" style="right:268px;top:493.2px;font-size:12.5px;color:#000;">Scale:</div><div class="t" style="right:268px;top:521.4px;font-size:12.5px;color:#000;">Reverse:</div><div style="left:1023px;top:133px;width:221px;height:23px;background:#e6dfdc;border-style:solid;border-width:2px;border-color:#857b7b #fffdfb #fffdfb #857b7b;"></div><div class="t" style="left:1027px;top:138.6px;font-size:12px;color:#000;">X</div><div style="left:1023px;top:162px;width:12px;height:12px;background:#b03060;border-style:solid;border-width:2px;border-color:#8a7f7f #fffdfb #fffdfb #8a7f7f"></div><div class="t" style="left:1041.5px;top:162.1px;font-size:12px;color:#000;">on</div><div style="left:1023px;top:186px;width:12px;height:12px;background:#b03060;border-style:solid;border-width:2px;border-color:#8a7f7f #fffdfb #fffdfb #8a7f7f"></div><div class="t" style="left:1041.5px;top:186.1px;font-size:12px;color:#000;">on</div><div style="left:1023px;top:210px;width:12px;height:12px;background:#b03060;border-style:solid;border-width:2px;border-color:#8a7f7f #fffdfb #fffdfb #8a7f7f"></div><div class="t" style="left:1041.5px;top:210.1px;font-size:12px;color:#000;">on</div><div class="t" style="right:129px;top:162.7px;font-size:12.5px;color:#000;">Fill mode:</div><div style="left:1163px;top:163px;width:11px;height:11px;background:#e6dfdc;border-style:solid;border-width:1px 2px 2px 1px;border-color:#fffdfb #a09898 #a09898 #fffdfb"></div><div class="t" style="left:1181px;top:162.1px;font-size:12px;color:#bdb5b3;">on</div><div class="t" style="right:129px;top:186.7px;font-size:12.5px;color:#000;">Position:</div><div style="left:1163px;top:181px;width:81px;height:23px;background:#e6dfdc;border-style:solid;border-width:2px;border-color:#857b7b #fffdfb #fffdfb #857b7b;"></div><div style="left:1165px;top:183px;width:76px;height:19px;overflow:hidden"><div class="t" style="left:1.5px;top:3.1px;font-size:12px;color:#000;">[3.3583148,-3.3</div></div><svg width="20" height="20" style="position:absolute;left:1017.0px;top:230.5px"><path d="M10,3 L17,10 L10,17 L3,10 Z" fill="#b03060"/><path d="M3,10 L10,3 L17,10" fill="none" stroke="#8a7f7f" stroke-width="2"/><path d="M3,10 L10,17 L17,10" fill="none" stroke="#fffdfb" stroke-width="2"/></svg><div class="t" style="left:1042px;top:234.3px;font-size:12px;color:#000;">0<span style="position:relative;left:2px">°</span></div><svg width="20" height="20" style="position:absolute;left:1062.5px;top:230.5px"><path d="M10,3 L17,10 L10,17 L3,10 Z" fill="#e6dfdc"/><path d="M3,10 L10,3 L17,10" fill="none" stroke="#fffdfb" stroke-width="2"/><path d="M3,10 L10,17 L17,10" fill="none" stroke="#8a7f7f" stroke-width="2"/></svg><div class="t" style="left:1087px;top:234.3px;font-size:12px;color:#000;">90<span style="position:relative;left:2px">°</span></div><svg width="20" height="20" style="position:absolute;left:1116.2px;top:230.5px"><path d="M10,3 L17,10 L10,17 L3,10 Z" fill="#e6dfdc"/><path d="M3,10 L10,3 L17,10" fill="none" stroke="#fffdfb" stroke-width="2"/><path d="M3,10 L10,17 L17,10" fill="none" stroke="#8a7f7f" stroke-width="2"/></svg><div class="t" style="left:1141px;top:234.3px;font-size:12px;color:#000;">180<span style="position:relative;left:2px">°</span></div><svg width="20" height="20" style="position:absolute;left:1175.8px;top:230.5px"><path d="M10,3 L17,10 L10,17 L3,10 Z" fill="#e6dfdc"/><path d="M3,10 L10,3 L17,10" fill="none" stroke="#fffdfb" stroke-width="2"/><path d="M3,10 L10,17 L17,10" fill="none" stroke="#8a7f7f" stroke-width="2"/></svg><div class="t" style="left:1200.3px;top:234.3px;font-size:12px;color:#000;">270<span style="position:relative;left:2px">°</span></div><div style="left:1239px;top:229px;width:5px;height:22px;background:#e6dfdc;border-style:solid;border-width:2px;border-color:#857b7b #fffdfb #fffdfb #857b7b;border-right:0"></div><div class="t" style="left:1032.5px;top:259.8px;font-size:12px;color:#000;">-1</div><div class="t" style="left:1141.5px;top:259.8px;font-size:12px;color:#000;">-2</div><div style="left:1018px;top:275px;width:100px;height:19px;background:#000;border-style:solid;border-width:2px;border-color:#857b7b #fffdfb #fffdfb #857b7b;"></div><div style="left:1021px;top:277px;width:31px;height:15px;background:#e6dfdc;border-style:solid;border-width:1px;border-color:#fffdfb #857b7b #857b7b #fffdfb;border-width:1px 2px 2px 1px"></div><div style="left:1035px;top:278px;width:2px;height:13px;border-left:1px solid #857b7b;border-right:1px solid #fffdfb"></div><div style="left:1128px;top:275px;width:116px;height:19px;background:#fff;border-style:solid;border-width:2px;border-color:#857b7b #fffdfb #fffdfb #857b7b;"></div><div style="left:1130px;top:277px;width:30px;height:15px;background:#e6dfdc;border-style:solid;border-width:1px;border-color:#fffdfb #857b7b #857b7b #fffdfb;border-width:1px 2px 2px 1px"></div><div style="left:1144px;top:278px;width:2px;height:13px;border-left:1px solid #857b7b;border-right:1px solid #fffdfb"></div><div class="t" style="left:1066.5px;top:305.3px;font-size:12px;color:#000;">1</div><div style="left:1022px;top:320px;width:222px;height:19px;background:#e6dfdc;border-style:solid;border-width:2px;border-color:#857b7b #fffdfb #fffdfb #857b7b;"></div><div style="left:1055px;top:322px;width:30px;height:15px;background:#e6dfdc;border-style:solid;border-width:1px;border-color:#fffdfb #857b7b #857b7b #fffdfb;border-width:1px 2px 2px 1px"></div><div style="left:1069px;top:323px;width:2px;height:13px;border-left:1px solid #857b7b;border-right:1px solid #fffdfb"></div><div style="left:1023px;top:343px;width:221px;height:21px;background:#e6dfdc;border-style:solid;border-width:2px;border-color:#857b7b #fffdfb #fffdfb #857b7b;"></div><div class="t" style="left:1026.5px;top:347.6px;font-size:12px;color:#000;">Helvetica</div><div style="left:1224px;top:345px;width:18px;height:17px;background:#e6dfdc;border-style:solid;border-width:1px;border-color:#fffdfb #857b7b #857b7b #fffdfb;"></div><svg width="12" height="8" style="position:absolute;left:1227px;top:350px"><path d="M0,0 H11 L5.5,7 Z" fill="#000"/></svg><div style="left:1023px;top:392px;width:221px;height:21px;background:#e6dfdc;border-style:solid;border-width:2px;border-color:#857b7b #fffdfb #fffdfb #857b7b;"></div><div class="t" style="left:1026.5px;top:396.5px;font-size:12px;color:#000;">bottom</div><div style="left:1224px;top:394px;width:18px;height:17px;background:#e6dfdc;border-style:solid;border-width:1px;border-color:#fffdfb #857b7b #857b7b #fffdfb;"></div><svg width="12" height="8" style="position:absolute;left:1227px;top:399px"><path d="M0,0 H11 L5.5,7 Z" fill="#000"/></svg><div class="t" style="left:1076.5px;top:421.3px;font-size:12px;color:#000;">6</div><div style="left:1022px;top:436px;width:222px;height:19px;background:#ff00ff;border-style:solid;border-width:2px;border-color:#857b7b #fffdfb #fffdfb #857b7b;"></div><div style="left:1064px;top:438px;width:30px;height:15px;background:#e6dfdc;border-style:solid;border-width:1px;border-color:#fffdfb #857b7b #857b7b #fffdfb;border-width:1px 2px 2px 1px"></div><div style="left:1078px;top:439px;width:2px;height:13px;border-left:1px solid #857b7b;border-right:1px solid #fffdfb"></div><div style="left:1023px;top:459px;width:102px;height:23px;background:#e6dfdc;border-style:solid;border-width:2px;border-color:#857b7b #fffdfb #fffdfb #857b7b;"></div><div class="t" style="left:1026.5px;top:464.2px;font-size:12px;color:#000;">-3.1415927</div><div style="left:1142px;top:459px;width:102px;height:23px;background:#e6dfdc;border-style:solid;border-width:2px;border-color:#857b7b #fffdfb #fffdfb #857b7b;"></div><div class="t" style="left:1145.5px;top:464.2px;font-size:12px;color:#000;">2.8584073</div><svg width="20" height="20" style="position:absolute;left:1020.6px;top:488.0px"><path d="M10,3 L17,10 L10,17 L3,10 Z" fill="#b03060"/><path d="M3,10 L10,3 L17,10" fill="none" stroke="#8a7f7f" stroke-width="2"/><path d="M3,10 L10,17 L17,10" fill="none" stroke="#fffdfb" stroke-width="2"/></svg><div class="t" style="left:1046px;top:492.8px;font-size:12px;color:#000;">Lin.</div><svg width="20" height="20" style="position:absolute;left:1079.7px;top:488.0px"><path d="M10,3 L17,10 L10,17 L3,10 Z" fill="#e6dfdc"/><path d="M3,10 L10,3 L17,10" fill="none" stroke="#fffdfb" stroke-width="2"/><path d="M3,10 L10,17 L17,10" fill="none" stroke="#8a7f7f" stroke-width="2"/></svg><div class="t" style="left:1105px;top:492.8px;font-size:12px;color:#000;">Log.</div><div style="left:1147px;top:483px;width:96px;height:31px;background:#e6dfdc;border-style:solid;border-width:2px;border-color:#fffdfb #857b7b #857b7b #fffdfb;"></div><div class="t" style="left:1147px;top:493.3px;width:96px;text-align:center;font-size:12px">Ticks...</div><div style="left:1024px;top:521px;width:11px;height:11px;background:#e6dfdc;border-style:solid;border-width:1px 2px 2px 1px;border-color:#fffdfb #a09898 #a09898 #fffdfb"></div><div class="t" style="left:1041.5px;top:520.8px;font-size:12px;color:#bdb5b3;">on</div><div style="left:1055px;top:548px;width:52px;height:30px;background:#e6dfdc;border-style:solid;border-width:2px;border-color:#fffdfb #857b7b #857b7b #fffdfb;"></div><div class="t" style="left:1055px;top:551.3px;width:52px;text-align:center;font-size:12px">Quit</div></div></div>
<div style="left:1246px;top:54px;width:19px;height:508px;background:#e6dfdc;border-left:1px solid #857b7b"></div>
<svg width="17" height="17" style="position:absolute;left:1247px;top:55px"><path d="M8.5,1 L16,16 L1,16 Z" fill="#e6dfdc"/><path d="M1,16 L8.5,1" stroke="#fffdfb" stroke-width="1.2"/><path d="M8.5,1 L16,16" fill="none" stroke="#857b7b" stroke-width="1" stroke-dasharray="1.5,1"/></svg>
<div style="left:1247px;top:72px;width:17px;height:461px;background:#e6dfdc;border-style:solid;border-width:1px;border-color:#fffdfb #857b7b #857b7b #fffdfb;"></div>
<svg width="17" height="17" style="position:absolute;left:1247px;top:545px"><path d="M1,1 L16,1 L8.5,16 Z" fill="#e6dfdc"/><path d="M1,1 L16,1" stroke="#fffdfb" stroke-width="1.2"/><path d="M16,1 L8.5,16" stroke="#857b7b" stroke-width="1.4"/></svg>
<div style="left:684px;top:562px;width:562px;height:19px;background:#e6dfdc;border-top:1px solid #857b7b"></div>
<svg width="19" height="17" style="position:absolute;left:684px;top:563px"><path d="M1,8.5 L18,1 L18,16 Z" fill="#e6dfdc"/><path d="M1,8.5 L18,1" stroke="#fffdfb" stroke-width="1"/><path d="M1,8.5 L18,16" stroke="#857b7b" stroke-width="1.4"/></svg>
<div style="left:703px;top:563px;width:498px;height:17px;background:#e6dfdc;border-style:solid;border-width:1px;border-color:#fffdfb #857b7b #857b7b #fffdfb;"></div>
<svg width="19" height="17" style="position:absolute;left:1226px;top:563px"><path d="M18,8.5 L1,1 L1,16 Z" fill="#e6dfdc"/><path d="M1,1 L18,8.5" stroke="#fffdfb" stroke-width="1"/><path d="M18,8.5 L1,16" stroke="#857b7b" stroke-width="1.4"/></svg>
<div style="left:0px;top:965px;width:669px;height:59px;background:linear-gradient(#b8b9bd 0px,#b2b3b7 4px,#a9aaae 6px,#cacaca 7px,#d2d2d2 15px,#dcdcdc 30px,#e8e8e8 45px,#f4f4f4 54px,#fbfbfb 58px,#c0c0c0 59px,#b0b0b0 62px);background-size:100% 62px;background-position:0 -3px"></div>
<div style="left:669px;top:962px;width:611px;height:62px;background:linear-gradient(#b8b9bd 0px,#b2b3b7 4px,#a9aaae 6px,#cacaca 7px,#d2d2d2 15px,#dcdcdc 30px,#e8e8e8 45px,#f4f4f4 54px,#fbfbfb 58px,#c0c0c0 59px,#b0b0b0 62px)"></div>
<svg width="52" height="52" style="position:absolute;left:4px;top:970px"><defs><linearGradient id="kg" x1="0" y1="0" x2="1" y2="1"><stop offset="0" stop-color="#c8e0f8"/><stop offset="0.35" stop-color="#5a94e0"/><stop offset="0.7" stop-color="#3a70d0"/><stop offset="1" stop-color="#2a58b8"/></linearGradient></defs>
<rect x="1.5" y="1.5" width="48" height="48" rx="6" fill="#14307a"/><rect x="3.5" y="3.5" width="44" height="44" rx="4" fill="#b8d8f8"/><rect x="5" y="5" width="41" height="41" rx="3" fill="url(#kg)"/>
<circle cx="24" cy="27" r="9.5" fill="none" stroke="#fff" stroke-width="4"/>
<g fill="#f4f8ff"><rect x="10" y="24" width="6" height="6" rx="1"/><rect x="22" y="37" width="6" height="7" rx="1"/><rect x="15" y="14" width="7" height="6" rx="1" transform="rotate(40 18 17)"/><rect x="14" y="35" width="7" height="6" rx="1" transform="rotate(-40 17 38)"/><rect x="32" y="35" width="7" height="6" rx="1" transform="rotate(40 35 38)"/></g>
<circle cx="25" cy="27" r="7.5" fill="#3a78d0"/>
<path d="M22,7 H28 V19 L38,7 H45 L33,20 L45,34 H38 L28,23 V33 H22 Z" fill="#f8fbff"/>
</svg>
<svg width="52" height="50" style="position:absolute;left:62px;top:971px"><defs><linearGradient id="kw" x1="0" y1="0" x2="1" y2="0"><stop offset="0" stop-color="#b8e4fc"/><stop offset="0.6" stop-color="#5aa8f0"/><stop offset="1" stop-color="#1a58d0"/></linearGradient></defs>
<path d="M1.4,26.9 L25.3,12.4 L45.7,30.9 L20.7,45.3 Z" fill="#3a88e0"/><path d="M4,27 L25.3,14.5 L42.5,30.5 L21,42.5 Z" fill="url(#kw)"/>
<path d="M10.3,18.2 L24.7,17 L36.8,32.3 L18.9,36 Z" fill="#f6f8fc" stroke="#c0c4d0" stroke-width="0.5"/>
<path d="M24.1,28 L32,5 L39.5,7.5 L28.5,30 Z" fill="#f8c818"/><path d="M32,5 L39.5,7.5 L36,9.5 Z" fill="#fcd860"/><path d="M24.1,28 L28.5,30 L25,33 Z" fill="#705030"/><path d="M34,6 L38,7.5 L29,28 L27,27 Z" fill="#f0a010" opacity="0.6"/>
<ellipse cx="45" cy="19.5" rx="4" ry="3" fill="#bbb" opacity="0.5"/></svg>
<svg width="50" height="50" style="position:absolute;left:121px;top:969px"><path d="M6,27 V49 H42 V27 L24,12 Z" fill="#f2f2f2" stroke="#b8b8b8" stroke-width="0.8"/><path d="M1,33 L23,2 L47,33 L43,34 L23,14 L5,34 Z" fill="#d84810"/><path d="M4,30 L23,3 L44,30 L23,13 Z" fill="#f88838"/><path d="M18,25 H31 V31 H18 Z" fill="#907060" stroke="#604838" stroke-width="0.8"/><path d="M20,35 H28 V49 H20 Z" fill="#e88830"/></svg>
<svg width="52" height="50" style="position:absolute;left:176px;top:969px"><g fill="#eeeeee" stroke="#a8a8a8" stroke-width="0.9"><path d="M18,2 L22,1 L30,16 L22,20 Z"/><path d="M4,17 H14 V27 H4 Z"/><path d="M8,36 L15,32 L20,42 L13,46 Z"/><path d="M22,41 H31 V50 H22 Z"/><path d="M38,38 L44,34 L50,44 L46,47 Z"/></g><circle cx="27" cy="26" r="17" fill="#e4e6ea" stroke="#a8acb4"/><circle cx="27" cy="26" r="14" fill="#1a5ad0"/><path d="M14,22 Q20,13 30,14 Q36,18 32,22 Q26,24 28,30 Q22,34 18,30 Q16,26 14,22 Z" fill="#a8d0f8"/><path d="M34,24 Q40,26 38,34 Q34,32 35,27 Z" fill="#a8d0f8"/></svg>
<svg width="50" height="48" style="position:absolute;left:236px;top:970px"><path d="M22,2 H40 L47,10 V42 L40,44 H24 Z" fill="#e09010"/><path d="M24,5 H40 L44,10 V16 H31 V21 H44 V26 H31 V31 H44 V38 L40,41 H24 Z" fill="#f8c830"/><path d="M2,26 L24,6 L30,32 L12,46 Z" fill="#eceef4" stroke="#8890a0" stroke-width="0.8"/><path d="M2,26 L18,28 L24,6" fill="none" stroke="#9098a8" stroke-width="0.8"/></svg>
<svg width="50" height="48" style="position:absolute;left:294px;top:970px"><circle cx="24.5" cy="24" r="16.5" fill="none" stroke="#e42424" stroke-width="11"/><circle cx="24.5" cy="24" r="16.5" fill="none" stroke="#fff" stroke-width="11" stroke-dasharray="12.96,12.96" stroke-dashoffset="6.48"/><circle cx="24.5" cy="24" r="11" fill="#ececec" stroke="#c02020" stroke-width="1"/><circle cx="24.5" cy="24" r="22" fill="none" stroke="#c01818" stroke-width="1"/></svg>
<div style="left:358px;top:968px;width:36px;height:26px;background:#eaeaea;border:1px solid #404040"><svg width="34" height="24" style="position:absolute;left:0;top:0"><path d="M10,4 L25,21 M25,4 L10,21" stroke="#666" stroke-width="3"/></svg></div>
<div class="t" style="left:371px;top:973px;font-size:17px;color:#000">1</div>
<div style="left:394px;top:966px;width:37px;height:30px;background:#fcf4f2"></div>
<div style="left:395px;top:968px;width:17px;height:12px;background:#fff;border:1px solid #404040"></div>
<div style="left:395px;top:981px;width:17px;height:12px;background:#fff;border:1px solid #404040"></div>
<div style="left:414px;top:968px;width:17px;height:17px;background:#1a5a8a"><svg width="17" height="17" style="position:absolute;left:0;top:0"><path d="M2,1 L15,16 M15,1 L2,16" stroke="#556070" stroke-width="2.5"/><path d="M3,2 L14,14" stroke="#c0c8d0" stroke-width="0.8"/></svg></div>
<div class="t" style="left:407px;top:973px;font-size:17px;color:#000">2</div>
<div style="left:358px;top:996px;width:36px;height:26px;background:#c4bebe"></div>
<div class="t" style="left:370px;top:1000px;font-size:17px;color:#111">3</div>
<div style="left:387px;top:1000px;width:5px;height:18px;background:#fff;border:1px solid #333"></div>
<div style="left:395px;top:996px;width:36px;height:26px;background:#c4bebe"></div>
<div class="t" style="left:408px;top:1000px;font-size:17px;color:#111">4</div>
<div class="t" style="left:465px;top:967.9px;font-size:15px;letter-spacing:0.5px;color:#000;width:167px;overflow:hidden;-webkit-mask-image:linear-gradient(90deg,#000 139px,rgba(0,0,0,0.15) 167px);mask-image:linear-gradient(90deg,#000 139px,rgba(0,0,0,0.15) 167px)">Scilab Download Pages</div>
<div class="t" style="left:660px;top:967.9px;font-size:15px;letter-spacing:0.5px;color:#000;width:168px;overflow:hidden;-webkit-mask-image:linear-gradient(90deg,#000 140px,rgba(0,0,0,0.15) 168px);mask-image:linear-gradient(90deg,#000 140px,rgba(0,0,0,0.15) 168px)">software.cientifico - Opera</div>
<div class="t" style="left:855px;top:967.9px;font-size:15px;letter-spacing:0.5px;color:#000;">Scilab Graphic (0)</div>
<div class="t" style="left:465px;top:986.8px;font-size:15px;letter-spacing:0.5px;color:#000;width:167px;overflow:hidden;-webkit-mask-image:linear-gradient(90deg,#000 139px,rgba(0,0,0,0.15) 167px);mask-image:linear-gradient(90deg,#000 139px,rgba(0,0,0,0.15) 167px)">emacs@dedalo.localdomain</div>
<div class="t" style="left:660px;top:986.8px;font-size:15px;letter-spacing:0.5px;color:#000;font-weight:bold;letter-spacing:0.6px;">Axes Editor</div>
<div class="t" style="left:855px;top:986.8px;font-size:15px;letter-spacing:0.5px;color:#000;">El GIMP</div>
<div class="t" style="left:465px;top:1005.2px;font-size:15px;letter-spacing:0.5px;color:#000;width:167px;overflow:hidden;-webkit-mask-image:linear-gradient(90deg,#000 139px,rgba(0,0,0,0.15) 167px);mask-image:linear-gradient(90deg,#000 139px,rgba(0,0,0,0.15) 167px)">jose@dedalo: /home/jose</div>
<div class="t" style="left:660px;top:1005.2px;font-size:15px;letter-spacing:0.5px;color:#000;">scilex</div>
<div class="t" style="left:855px;top:1005.2px;font-size:15px;letter-spacing:0.5px;color:#000;">Kopete [2]</div>
<svg width="17" height="17" style="position:absolute;left:446px;top:968px"><circle cx="8.5" cy="9" r="7.5" fill="#3040c8"/><circle cx="7" cy="7" r="4" fill="#8090f0"/><path d="M10,2 L16,1 L14,6" fill="#c0c8f0"/></svg>
<svg width="18" height="18" style="position:absolute;left:445px;top:986px"><path d="M2,4 Q0,1 4,2 Q6,5 9,5 Q12,5 14,2 Q18,1 16,4 Q15,8 13,8 Q13,13 9,17 Q5,13 5,8 Q3,8 2,4 Z" fill="#fff" stroke="#111" stroke-width="1.4"/></svg>
<svg width="17" height="17" style="position:absolute;left:446px;top:1005px"><path d="M2,1 L15,16 M15,1 L2,16" stroke="#555" stroke-width="3"/><path d="M3,2 L14,14" stroke="#bbb" stroke-width="0.9"/></svg>
<svg width="18" height="18" style="position:absolute;left:640px;top:968px"><path d="M2,6 H16 V17 H2 Z" fill="#70b030"/><path d="M4,9 H8 V12 H4 Z M10,9 H14 V12 H10 Z M4,13 H8 V16 H4 Z M10,13 H14 V16 H10 Z" fill="#e8f8c0"/><path d="M3,2 L15,1 L16,5 L3,6 Z" fill="#c0d8a0" stroke="#70a040" stroke-width="0.8"/></svg>
<svg width="17" height="17" style="position:absolute;left:641px;top:987px"><path d="M2,1 L15,16 M15,1 L2,16" stroke="#555" stroke-width="3"/><path d="M3,2 L14,14" stroke="#bbb" stroke-width="0.9"/></svg>
<svg width="17" height="17" style="position:absolute;left:641px;top:1005px"><path d="M2,1 L15,16 M15,1 L2,16" stroke="#555" stroke-width="3"/><path d="M3,2 L14,14" stroke="#bbb" stroke-width="0.9"/></svg>
<svg width="17" height="17" style="position:absolute;left:836px;top:968px"><path d="M2,1 L15,16 M15,1 L2,16" stroke="#555" stroke-width="3"/><path d="M3,2 L14,14" stroke="#bbb" stroke-width="0.9"/></svg>
<svg width="18" height="14" style="position:absolute;left:835px;top:989px"><path d="M1,10 Q4,4 10,6 L14,2 L13,7 Q17,9 16,12 H3 Z" fill="#504030"/><path d="M4,11 H15" stroke="#a09070" stroke-width="1"/></svg>
<svg width="16" height="18" style="position:absolute;left:836px;top:1005px"><circle cx="8" cy="7" r="6" fill="#f8e020" stroke="#c8a000" stroke-width="0.8"/><path d="M5,12 H11 V16 H5 Z" fill="#b0b0b0"/></svg>
<svg width="10" height="8" style="position:absolute;left:1012px;top:1009px"><path d="M1,7 L5,2 L9,7 Z" fill="#000"/></svg>
<svg width="62" height="60" style="position:absolute;left:1028px;top:964px"><defs><linearGradient id="kb" x1="0" y1="0" x2="1" y2="1"><stop offset="0" stop-color="#a8ccf8"/><stop offset="0.5" stop-color="#4a88e8"/><stop offset="1" stop-color="#1a50c0"/></linearGradient></defs>
<circle cx="10.8" cy="13.2" r="5.8" fill="#f4b010" stroke="#8a7050" stroke-width="0.9"/><circle cx="45.1" cy="13.2" r="5.8" fill="#f05010" stroke="#8a5a50" stroke-width="0.9"/>
<circle cx="10.8" cy="47.5" r="5.8" fill="#20b020" stroke="#306040" stroke-width="0.9"/><circle cx="45.1" cy="47.5" r="5.8" fill="#1a78f0" stroke="#204a90" stroke-width="0.9"/>
<ellipse cx="10.8" cy="16" rx="3" ry="1.6" fill="#fff" opacity="0.7"/><ellipse cx="45.1" cy="16" rx="3" ry="1.6" fill="#fff" opacity="0.7"/><ellipse cx="10.8" cy="50" rx="3" ry="1.6" fill="#fff" opacity="0.6"/><ellipse cx="45.1" cy="50" rx="3" ry="1.6" fill="#fff" opacity="0.6"/>
<path d="M12.3,20.2 L42.5,20 L43.5,35 L34,37.5 L37.5,45 L27,39 L13,40 Z" fill="url(#kb)" stroke="#2040a0" stroke-width="0.8"/>
<path d="M30,23 Q34,29 29,35" fill="none" stroke="#fff" stroke-width="1"/><circle cx="23.5" cy="27.5" r="1" fill="#fff"/><path d="M23.5,31 L22.5,34" stroke="#fff" stroke-width="1.2"/>
</svg>
<svg width="20" height="22" style="position:absolute;left:1098px;top:970px"><path d="M2,8 H7 L15,2 V20 L7,14 H2 Z" fill="#4080c0" stroke="#204880" stroke-width="1"/><path d="M9,6 Q12,11 9,16" fill="none" stroke="#c8e0f8" stroke-width="1.5"/></svg>
<svg width="24" height="22" style="position:absolute;left:1120px;top:970px"><circle cx="4" cy="4" r="3" fill="#f0c030"/><circle cx="20" cy="4" r="3" fill="#e05030"/><circle cx="4" cy="18" r="3" fill="#30b030"/><circle cx="20" cy="18" r="3" fill="#2070e0"/><path d="M5,7 L19,6 L18,15 L6,16 Z" fill="#4080e0"/></svg>
<svg width="20" height="22" style="position:absolute;left:1098px;top:998px"><rect x="2" y="4" width="15" height="17" rx="2" fill="#f8e8c0" stroke="#d0a050" stroke-width="1.5"/><rect x="6" y="1" width="7" height="5" rx="2" fill="#e0e0e0" stroke="#999" stroke-width="0.8"/><text x="9.5" y="18" font-size="11" text-anchor="middle" fill="#888" font-family="Liberation Sans">k</text></svg>
<svg width="24" height="24" style="position:absolute;left:1120px;top:997px"><rect x="1" y="2" width="21" height="17" fill="#fff" stroke="#3060b0" stroke-width="1.5"/><path d="M1,6 H22 M8,6 V19 M15,6 V19 M1,12 H22" stroke="#80a0d0" stroke-width="0.8"/><circle cx="17" cy="13" r="3" fill="#e0a030"/><path d="M12,23 Q17,14 22,23 Z" fill="#f0b030"/></svg>
<svg width="48" height="50" style="position:absolute;left:1150px;top:970px"><rect x="2" y="2" width="44" height="34" rx="4" fill="#f4f4f4" stroke="#b0b0b0" stroke-width="1"/><rect x="6" y="6" width="36" height="26" rx="1" fill="#101010"/><path d="M10,10 L16,14 L10,18" fill="none" stroke="#fff" stroke-width="2"/><path d="M17,21 H24" stroke="#fff" stroke-width="2"/><path d="M18,36 H30 L31,40 H17 Z" fill="#d8d8d8"/><ellipse cx="24" cy="42.5" rx="15" ry="5.5" fill="#ececec" stroke="#a8a8a8" stroke-width="0.9"/><ellipse cx="24" cy="41.5" rx="10" ry="2.5" fill="#fafafa"/></svg>
<svg width="66" height="24" style="position:absolute;left:1214px;top:983px"><g fill="#a8a8a8"><rect x="3.0" y="2.0" width="9.0" height="3.0"/><rect x="10.0" y="3.0" width="3.0" height="9.0"/><rect x="3.0" y="10.5" width="9.0" height="3.0"/><rect x="2.0" y="12.0" width="3.0" height="10.0"/><rect x="3.0" y="19.0" width="9.0" height="3.0"/><rect x="15.0" y="2.0" width="9.0" height="3.0"/><rect x="22.0" y="3.0" width="3.0" height="9.0"/><rect x="22.0" y="12.0" width="3.0" height="10.0"/><rect x="15.0" y="19.0" width="9.0" height="3.0"/><rect x="14.0" y="12.0" width="3.0" height="10.0"/><rect x="14.0" y="3.0" width="3.0" height="9.0"/><rect x="40.0" y="2.0" width="9.0" height="3.0"/><rect x="39.0" y="3.0" width="3.0" height="9.0"/><rect x="40.0" y="10.5" width="9.0" height="3.0"/><rect x="47.0" y="12.0" width="3.0" height="10.0"/><rect x="40.0" y="19.0" width="9.0" height="3.0"/><rect x="52.0" y="2.0" width="9.0" height="3.0"/><rect x="59.0" y="3.0" width="3.0" height="9.0"/><rect x="59.0" y="12.0" width="3.0" height="10.0"/><rect x="52.0" y="19.0" width="9.0" height="3.0"/><rect x="51.0" y="12.0" width="3.0" height="10.0"/><rect x="51.0" y="3.0" width="3.0" height="9.0"/><rect x="52.0" y="10.5" width="9.0" height="3.0"/><rect x="30" y="7" width="3" height="3"/><rect x="30" y="14" width="3" height="3"/></g><g fill="#000"><rect x="2.0" y="1.0" width="9.0" height="3.0"/><rect x="9.0" y="2.0" width="3.0" height="9.0"/><rect x="2.0" y="9.5" width="9.0" height="3.0"/><rect x="1.0" y="11.0" width="3.0" height="10.0"/><rect x="2.0" y="18.0" width="9.0" height="3.0"/><rect x="14.0" y="1.0" width="9.0" height="3.0"/><rect x="21.0" y="2.0" width="3.0" height="9.0"/><rect x="21.0" y="11.0" width="3.0" height="10.0"/><rect x="14.0" y="18.0" width="9.0" height="3.0"/><rect x="13.0" y="11.0" width="3.0" height="10.0"/><rect x="13.0" y="2.0" width="3.0" height="9.0"/><rect x="39.0" y="1.0" width="9.0" height="3.0"/><rect x="38.0" y="2.0" width="3.0" height="9.0"/><rect x="39.0" y="9.5" width="9.0" height="3.0"/><rect x="46.0" y="11.0" width="3.0" height="10.0"/><rect x="39.0" y="18.0" width="9.0" height="3.0"/><rect x="51.0" y="1.0" width="9.0" height="3.0"/><rect x="58.0" y="2.0" width="3.0" height="9.0"/><rect x="58.0" y="11.0" width="3.0" height="10.0"/><rect x="51.0" y="18.0" width="9.0" height="3.0"/><rect x="50.0" y="11.0" width="3.0" height="10.0"/><rect x="50.0" y="2.0" width="3.0" height="9.0"/><rect x="51.0" y="9.5" width="9.0" height="3.0"/><rect x="29" y="7" width="3" height="3"/><rect x="29" y="14" width="3" height="3"/></g></svg>
</body></html>
